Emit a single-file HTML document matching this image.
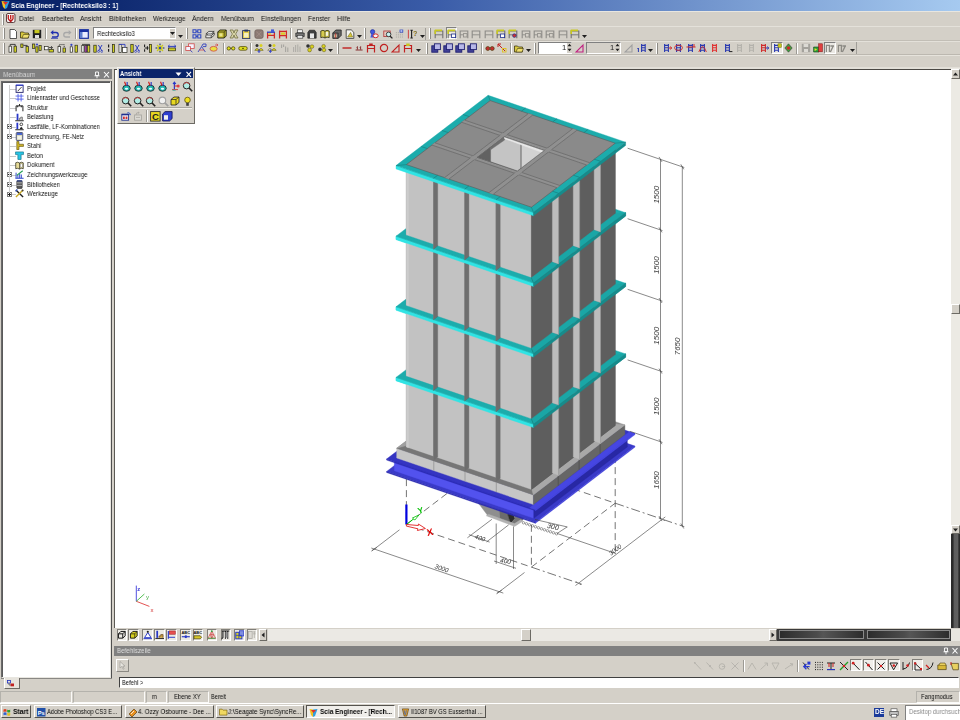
<!DOCTYPE html><html><head><meta charset="utf-8"><title>Scia Engineer</title><style>

html,body{margin:0;padding:0}
body{width:960px;height:720px;background:#d4d0c8;position:relative;overflow:hidden;
 font-family:"Liberation Sans",sans-serif;font-size:8px;color:#222;line-height:1}
.a{position:absolute}
.t{position:absolute;white-space:nowrap;will-change:transform}
.sep{position:absolute;width:1px;background:#9c9a94;box-shadow:1px 0 0 #fff}
.grip{position:absolute;width:2px;border-left:1px solid #fff;border-right:1px solid #8c8a84;box-sizing:border-box}
.sunk{position:absolute;border:1px solid;border-color:#b4b2ac #fbfaf8 #fbfaf8 #b4b2ac;box-sizing:border-box}
.raise{position:absolute;border:1px solid;border-color:#fff #6c6a64 #6c6a64 #fff;box-sizing:border-box;background:#d4d0c8}
.ic{position:absolute;width:10px;height:10px}
.tb{position:absolute;height:13px;box-sizing:border-box;border:1px solid;border-color:#fff #55534e #55534e #fff;background:#d4d0c8;font-size:8px;white-space:nowrap;overflow:hidden}
.tb span{position:absolute;top:3px}

</style></head><body>
<div class="a" style="left:0;top:0;width:960px;height:11px;background:linear-gradient(90deg,#0a246a 0%,#0a246a 8%,#3a5ca8 45%,#a6caf0 100%)"></div>
<svg class="a" style="left:1px;top:0" width="10" height="11"><polygon points="0.5,1 4,1.5 4,9 2,7" fill="#f0c020"/><polygon points="4,1.5 8.5,1 6,8 4,9" fill="#30a0e0"/><polygon points="2,2 7,2 4.5,5" fill="#e03030"/></svg>
<div class="t" style="left:11.0px;top:1.88px;font-size:7.7px;color:#fff;font-weight:bold;transform-origin:0 0;transform:scaleX(0.853);">Scia Engineer - [Rechtecksilo3 : 1]</div>
<div class="a" style="left:0;top:11px;width:960px;height:15px;background:#d4d0c8;border-top:1px solid #e8e6e0"></div>
<div class="grip" style="left:2px;top:14px;height:11px"></div>
<svg class="a" style="left:6px;top:13px" width="10" height="11"><rect x="0.5" y="0.5" width="8.5" height="9" rx="1.5" fill="#f4f4f4" stroke="#503030" stroke-width="0.9"/><path d="M2.3,2 v4 M4.7,2 v4.5 M7,2 v4 M2.3,6 L4.7,8.5 L7,6" stroke="#c01818" stroke-width="1.3" fill="none"/></svg>
<div class="t" style="left:19.0px;top:14.51px;font-size:7.2px;color:#101010;transform-origin:0 0;transform:scaleX(0.892);">Datei</div>
<div class="t" style="left:41.5px;top:14.51px;font-size:7.2px;color:#101010;transform-origin:0 0;transform:scaleX(0.919);">Bearbeiten</div>
<div class="t" style="left:80.0px;top:14.51px;font-size:7.2px;color:#101010;transform-origin:0 0;transform:scaleX(0.911);">Ansicht</div>
<div class="t" style="left:108.5px;top:14.51px;font-size:7.2px;color:#101010;transform-origin:0 0;transform:scaleX(0.943);">Bibliotheken</div>
<div class="t" style="left:153.0px;top:14.51px;font-size:7.2px;color:#101010;transform-origin:0 0;transform:scaleX(0.896);">Werkzeuge</div>
<div class="t" style="left:192.0px;top:14.51px;font-size:7.2px;color:#101010;transform-origin:0 0;transform:scaleX(0.926);">Ändern</div>
<div class="t" style="left:220.5px;top:14.51px;font-size:7.2px;color:#101010;transform-origin:0 0;transform:scaleX(0.916);">Menübaum</div>
<div class="t" style="left:260.5px;top:14.51px;font-size:7.2px;color:#101010;transform-origin:0 0;transform:scaleX(0.925);">Einstellungen</div>
<div class="t" style="left:307.5px;top:14.51px;font-size:7.2px;color:#101010;transform-origin:0 0;transform:scaleX(0.901);">Fenster</div>
<div class="t" style="left:336.5px;top:14.51px;font-size:7.2px;color:#101010;transform-origin:0 0;transform:scaleX(0.923);">Hilfe</div>
<div class="a" style="left:0;top:25.5px;width:960px;height:1px;background:#e4e1da"></div>
<div class="a" style="left:0;top:40px;width:960px;height:1px;background:#c2beb6"></div>
<div class="a" style="left:0;top:41px;width:960px;height:1px;background:#e4e1da"></div>
<div class="a" style="left:0;top:54px;width:960px;height:1px;background:#bcb8b0"></div>
<div class="a" style="left:0;top:55px;width:960px;height:1px;background:#e6e3dc"></div>
<div class="grip" style="left:3px;top:28px;height:11px"></div>
<svg class="a" style="left:8px;top:28.5px" width="10" height="10" viewBox="0 0 10 10"><path d="M2,0.5 h4.5 l2,2 v7 h-6.5 z" fill="#fff" stroke="#303030" stroke-width="0.8"/></svg>
<svg class="a" style="left:20px;top:28.5px" width="10" height="10" viewBox="0 0 10 10"><path d="M0.5,3 h3 l1,1 h4 v5 h-8 z" fill="#d8c840" stroke="#403810" stroke-width="0.8"/><path d="M2,9 l1.5,-3.5 h6 l-1.5,3.5 z" fill="#f0e070" stroke="#403810" stroke-width="0.6"/></svg>
<svg class="a" style="left:32px;top:28.5px" width="10" height="10" viewBox="0 0 10 10"><rect x="0.8" y="0.8" width="8.4" height="8.4" fill="#202020"/><rect x="2.5" y="1" width="5" height="3.2" fill="#c8c820"/><rect x="3" y="6" width="4" height="3" fill="#e0e0e0"/></svg>
<div class="sep" style="left:45px;top:28px;height:11px"></div>
<svg class="a" style="left:50px;top:28.5px" width="10" height="10" viewBox="0 0 10 10"><path d="M2,3.5 h4 a2,2 0 0 1 0,4.5 h-4" fill="none" stroke="#2030b0" stroke-width="1.3"/><path d="M0.5,3.5 l2.8,-2.5 v5 z" fill="#2030b0"/><path d="M1,9.3 h7" stroke="#2030b0" stroke-width="0.8"/></svg>
<svg class="a" style="left:62px;top:28.5px" width="10" height="10" viewBox="0 0 10 10"><path d="M8,3.5 h-4 a2,2 0 0 0 0,4.5 h4" fill="none" stroke="#a8a8a8" stroke-width="1.3"/><path d="M9.5,3.5 l-2.8,-2.5 v5 z" fill="#a8a8a8"/></svg>
<div class="sep" style="left:75px;top:28px;height:11px"></div>
<svg class="a" style="left:78.5px;top:28.5px" width="10" height="10" viewBox="0 0 10 10"><rect x="0.7" y="0.7" width="8.6" height="8.6" fill="#e8ecff" stroke="#1830a0" stroke-width="1.2"/><rect x="1" y="1" width="8" height="2" fill="#1830a0"/><rect x="1" y="3" width="2.5" height="6" fill="#6080d0"/></svg>
<div class="a" style="left:92.5px;top:27.3px;width:83px;height:11.4px;background:#fff;border:1px solid;border-color:#808080 #fff #fff #808080;box-sizing:border-box"></div>
<div class="t" style="left:97.0px;top:29.91px;font-size:7.2px;color:#101010;transform-origin:0 0;transform:scaleX(0.848);">Rechtecksilo3</div>
<div class="a" style="left:168.5px;top:28.3px;width:6.5px;height:9.4px;background:#d4d0c8;border-left:1px solid #fff;border-top:1px solid #fff;box-sizing:border-box"></div>
<svg class="a" style="left:169.5px;top:32.2px" width="5" height="4"><path d="M0,0 h5 l-2.5,3 z" fill="#202020"/></svg>
<svg class="a" style="left:177.8px;top:34.5px" width="5" height="4"><path d="M0,0 h5 l-2.5,3 z" fill="#202020"/></svg>
<div class="grip" style="left:186px;top:28px;height:11px"></div>
<svg class="a" style="left:191.6px;top:28.5px" width="10" height="10" viewBox="0 0 10 10"><path d="M1,0.8 h3 v3 h-3 z M5.8,0.8 h3 v3 h-3 z M1,5.8 h3 v3.2 h-3 z M5.8,5.8 h3 v3.2 h-3 z M4,2.3 h1.8 M4,7.4 h1.8" fill="none" stroke="#3048c0" stroke-width="1.1"/></svg>
<svg class="a" style="left:204.6px;top:28.5px" width="10" height="10" viewBox="0 0 10 10"><path d="M0.8,6.6 l3,-2.6 h5.4 l-3,2.6 z" fill="#f4f4f4" stroke="#202020" stroke-width="0.8"/><path d="M0.8,6.6 v2.2 h5.4 v-2.2 M6.2,8.8 l3,-2.6 v-2.2 M0.8,5 l3,-2.6 h5.4 l-3,2.6 z" fill="#e4e4e4" stroke="#202020" stroke-width="0.7"/></svg>
<svg class="a" style="left:216.8px;top:28.5px" width="10" height="10" viewBox="0 0 10 10"><path d="M0.8,3 l2,-2 h6.4 v6 l-2,2 h-6.4 z" fill="#c8c030" stroke="#202010" stroke-width="0.9"/><path d="M0.8,3 h6.4 v6 M7.2,3 l2,-2" fill="none" stroke="#202010" stroke-width="0.7"/><rect x="2.4" y="4.4" width="3" height="3" fill="#e8e490"/></svg>
<svg class="a" style="left:229px;top:28.5px" width="10" height="10" viewBox="0 0 10 10"><path d="M1,1 h3 l1,3 l1,-3 h3 l-2.4,4 l2.4,4 h-3 l-1,-3 l-1,3 h-3 l2.4,-4 z" fill="#d8d4a8" stroke="#6c6838" stroke-width="0.7"/></svg>
<svg class="a" style="left:241.4px;top:28.5px" width="10" height="10" viewBox="0 0 10 10"><rect x="1.6" y="1.6" width="7.2" height="8" fill="#e8d048" stroke="#283868" stroke-width="0.9"/><rect x="3.4" y="0.6" width="3.6" height="2" fill="#283868"/><rect x="3" y="4" width="4.4" height="4.4" fill="#f4f0c0"/></svg>
<svg class="a" style="left:253.6px;top:28.5px" width="10" height="10" viewBox="0 0 10 10"><rect x="0.8" y="0.8" width="8.4" height="8.6" rx="2" fill="#8c7a74" stroke="#6a5c58" stroke-width="0.6"/><path d="M2.4,2.6 L7.6,7.8 M7.6,2.6 L2.4,7.8" stroke="#a08c86" stroke-width="0.9"/></svg>
<svg class="a" style="left:265.8px;top:28.5px" width="10" height="10" viewBox="0 0 10 10"><path d="M1.6,9.4 V3.4 M8.4,9.4 V3.4 M1.6,6.4 H8.4" stroke="#d02828" stroke-width="1.3" fill="none"/><path d="M1,3.2 H9" stroke="#2838c0" stroke-width="1.3"/><rect x="5" y="0.4" width="3" height="2.6" fill="#4058d8"/><rect x="2.8" y="4.2" width="2" height="1.8" fill="#e0c828"/></svg>
<svg class="a" style="left:278.2px;top:28.5px" width="10" height="10" viewBox="0 0 10 10"><path d="M1.6,9.4 V1.6 M8.4,9.4 V1.6 M1.6,6.6 H8.4 M1.6,2.4 H8.4" stroke="#d02828" stroke-width="1.3" fill="none"/><rect x="2.8" y="3.4" width="4.4" height="2.4" fill="#e0c828"/></svg>
<div class="sep" style="left:290px;top:28px;height:11px"></div>
<svg class="a" style="left:294.6px;top:28.5px" width="10" height="10" viewBox="0 0 10 10"><rect x="2.6" y="0.8" width="5" height="3" fill="#f4f4f4" stroke="#303030" stroke-width="0.6"/><path d="M0.8,4 h8.4 v3.6 h-8.4 z" fill="#787878" stroke="#202020" stroke-width="0.7"/><rect x="2.2" y="6.4" width="5.6" height="2.8" fill="#e8e8e8" stroke="#303030" stroke-width="0.6"/></svg>
<svg class="a" style="left:307px;top:28.5px" width="10" height="10" viewBox="0 0 10 10"><path d="M0.8,9.2 V3.6 l1.6,-2.4 h5.2 l1.6,2.4 V9.2 z" fill="#404040" stroke="#181818" stroke-width="0.6"/><rect x="3" y="4.4" width="4" height="4.8" fill="#e8e8e8"/></svg>
<svg class="a" style="left:320px;top:28.5px" width="10" height="10" viewBox="0 0 10 10"><path d="M0.8,2 q2.2,-1.4 4.2,0.2 q2,-1.6 4.2,-0.2 v6.6 q-2.2,-1.2 -4.2,0.4 q-2,-1.6 -4.2,-0.4 z" fill="#d8cc50" stroke="#282810" stroke-width="0.8"/><path d="M5,2.2 v6.8" stroke="#282810" stroke-width="0.7"/><rect x="5.8" y="3" width="2.4" height="3.8" fill="#f4f4e0"/></svg>
<svg class="a" style="left:332.4px;top:28.5px" width="10" height="10" viewBox="0 0 10 10"><path d="M0.8,4 l3,-3 h5.4 v5.4 l-3,3 h-5.4 z" fill="#686868" stroke="#202020" stroke-width="0.8"/><path d="M0.8,4 h5.4 v5.4" fill="none" stroke="#202020" stroke-width="0.6"/><rect x="2" y="5.4" width="3" height="2.8" fill="#c8b090"/><path d="M3.6,4 v5.4" stroke="#c03030" stroke-width="0.7"/></svg>
<svg class="a" style="left:344.6px;top:28.5px" width="10" height="10" viewBox="0 0 10 10"><path d="M1.2,0.8 h5 l2.6,2.6 v6 h-7.6 z" fill="#f4f4f0" stroke="#303030" stroke-width="0.8"/><path d="M2.6,8 l3,-4.6 l2,4.6 z" fill="#d8c838" stroke="#605810" stroke-width="0.5"/></svg>
<svg class="a" style="left:356.5px;top:34.5px" width="5" height="4"><path d="M0,0 h5 l-2.5,3 z" fill="#202020"/></svg>
<div class="grip" style="left:364px;top:28px;height:11px"></div>
<svg class="a" style="left:369.4px;top:28.5px" width="10" height="10" viewBox="0 0 10 10"><circle cx="3.6" cy="2.8" r="2.2" fill="#4058e0" stroke="#182890" stroke-width="0.6"/><path d="M2.4,4.8 h2.6 l1,3.8 h-4.6 z" fill="#4058e0"/><ellipse cx="6.6" cy="6.8" rx="2.6" ry="1.9" fill="#f4f4f4" stroke="#d02828" stroke-width="1"/></svg>
<svg class="a" style="left:382.6px;top:28.5px" width="10" height="10" viewBox="0 0 10 10"><rect x="0.8" y="2" width="6.4" height="5.6" fill="#e8c8c0" stroke="#b03030" stroke-width="0.8"/><circle cx="5.6" cy="5.4" r="2.3" fill="#c8f0f0" stroke="#202020" stroke-width="0.8"/><path d="M7.2,7.2 L9.4,9.4" stroke="#202020" stroke-width="1.3"/></svg>
<svg class="a" style="left:395px;top:28.5px" width="10" height="10" viewBox="0 0 10 10"><path d="M1.4,3 V9 M3.4,3 V9 M5.4,3 V9 M7.4,3 V9" stroke="#a8a6a0" stroke-width="0.8" stroke-dasharray="1 0.8"/><rect x="4.6" y="0.6" width="3.6" height="3" fill="#3048c0"/><rect x="5.4" y="1.4" width="2" height="1.2" fill="#fff"/></svg>
<svg class="a" style="left:407.4px;top:28.5px" width="10" height="10" viewBox="0 0 10 10"><path d="M1.4,0.8 V9.4" stroke="#d05050" stroke-width="1.1"/><path d="M3.4,1.2 h2.4 M3.4,9 h2.4 M4.6,1.2 V9" stroke="#202020" stroke-width="1.1" fill="none"/><text x="6" y="7" font-size="7.5" font-weight="bold" fill="#807020" font-family="Liberation Sans, sans-serif">?</text></svg>
<svg class="a" style="left:419.5px;top:34.5px" width="5" height="4"><path d="M0,0 h5 l-2.5,3 z" fill="#202020"/></svg>
<div class="a" style="left:424.6px;top:27.5px;width:1px;height:12px;background:#a09e98"></div>
<div class="grip" style="left:429px;top:28px;height:11px"></div>
<svg class="a" style="left:434.3px;top:28.5px" width="10" height="10" viewBox="0 0 10 10"><path d="M1.2,9.2 V2 H8.8 V9.2" fill="none" stroke="#707070" stroke-width="1.1"/><path d="M1.2,5.8 H8.8" stroke="#707070" stroke-width="0.9"/><path d="M0.8,1.4 H8 M1.2,1 V5" stroke="#c8c820" stroke-width="1.6" fill="none"/></svg>
<div class="a" style="left:445.83px;top:27.2px;width:11.6px;height:11.8px;background:#ebe9e4;border:1px solid;border-color:#808080 #fff #fff #808080;box-sizing:border-box"></div>
<svg class="a" style="left:446.6px;top:28.5px" width="10" height="10" viewBox="0 0 10 10"><path d="M1.2,9.2 V2 H8.8 V9.2" fill="none" stroke="#707070" stroke-width="1.1"/><path d="M1.2,5.8 H8.8" stroke="#707070" stroke-width="0.9"/><path d="M0.8,1.4 H8 M1.2,1 V5" stroke="#c8c820" stroke-width="1.6" fill="none"/><rect x="4.6" y="5" width="4" height="3.6" fill="#fff" stroke="#203090" stroke-width="0.8"/></svg>
<svg class="a" style="left:459.0px;top:28.5px" width="10" height="10" viewBox="0 0 10 10"><path d="M1.2,9.2 V2 H8.8 V9.2" fill="none" stroke="#8c8a86" stroke-width="1.1"/><path d="M1.2,5.8 H8.8" stroke="#8c8a86" stroke-width="0.9"/><rect x="4.4" y="4.6" width="3.6" height="3.4" fill="#d4d0c8" stroke="#8c8a86" stroke-width="0.8"/></svg>
<svg class="a" style="left:471.3px;top:28.5px" width="10" height="10" viewBox="0 0 10 10"><path d="M1.2,9.2 V2 H8.8 V9.2" fill="none" stroke="#8c8a86" stroke-width="1.1"/><path d="M1.2,5.8 H8.8" stroke="#8c8a86" stroke-width="0.9"/></svg>
<svg class="a" style="left:483.6px;top:28.5px" width="10" height="10" viewBox="0 0 10 10"><path d="M1.2,9.2 V2 H8.8 V9.2" fill="none" stroke="#8c8a86" stroke-width="1.1"/><path d="M1.2,5.8 H8.8" stroke="#8c8a86" stroke-width="0.9"/></svg>
<svg class="a" style="left:495.9px;top:28.5px" width="10" height="10" viewBox="0 0 10 10"><path d="M1.2,9.2 V2 H8.8 V9.2" fill="none" stroke="#707070" stroke-width="1.1"/><path d="M1.2,5.8 H8.8" stroke="#707070" stroke-width="0.9"/><path d="M0.8,1.4 H8 M1.2,1 V5" stroke="#c8c820" stroke-width="1.6" fill="none"/><rect x="4.6" y="5" width="4" height="3.6" fill="#fff" stroke="#203090" stroke-width="0.8"/></svg>
<svg class="a" style="left:508.3px;top:28.5px" width="10" height="10" viewBox="0 0 10 10"><path d="M1.2,9.2 V2 H8.8 V9.2" fill="none" stroke="#707070" stroke-width="1.1"/><path d="M1.2,5.8 H8.8" stroke="#707070" stroke-width="0.9"/><path d="M0.8,1.4 H8 M1.2,1 V5" stroke="#c8c820" stroke-width="1.6" fill="none"/><circle cx="6.4" cy="6.6" r="1.8" fill="#d03030" stroke="#203090" stroke-width="0.7"/></svg>
<svg class="a" style="left:520.6px;top:28.5px" width="10" height="10" viewBox="0 0 10 10"><path d="M1.2,9.2 V2 H8.8 V9.2" fill="none" stroke="#8c8a86" stroke-width="1.1"/><path d="M1.2,5.8 H8.8" stroke="#8c8a86" stroke-width="0.9"/><rect x="4.4" y="4.6" width="3.6" height="3.4" fill="#d4d0c8" stroke="#8c8a86" stroke-width="0.8"/></svg>
<svg class="a" style="left:532.9px;top:28.5px" width="10" height="10" viewBox="0 0 10 10"><path d="M1.2,9.2 V2 H8.8 V9.2" fill="none" stroke="#8c8a86" stroke-width="1.1"/><path d="M1.2,5.8 H8.8" stroke="#8c8a86" stroke-width="0.9"/><rect x="4.4" y="4.6" width="3.6" height="3.4" fill="#d4d0c8" stroke="#8c8a86" stroke-width="0.8"/></svg>
<svg class="a" style="left:545.3px;top:28.5px" width="10" height="10" viewBox="0 0 10 10"><path d="M1.2,9.2 V2 H8.8 V9.2" fill="none" stroke="#8c8a86" stroke-width="1.1"/><path d="M1.2,5.8 H8.8" stroke="#8c8a86" stroke-width="0.9"/><rect x="4.4" y="4.6" width="3.6" height="3.4" fill="#d4d0c8" stroke="#8c8a86" stroke-width="0.8"/></svg>
<svg class="a" style="left:557.6px;top:28.5px" width="10" height="10" viewBox="0 0 10 10"><path d="M1.2,9.2 V2 H8.8 V9.2" fill="none" stroke="#8c8a86" stroke-width="1.1"/><path d="M1.2,5.8 H8.8" stroke="#8c8a86" stroke-width="0.9"/></svg>
<svg class="a" style="left:569.9px;top:28.5px" width="10" height="10" viewBox="0 0 10 10"><path d="M1.2,9.2 V2 H8.8 V9.2" fill="none" stroke="#707070" stroke-width="1.1"/><path d="M1.2,5.8 H8.8" stroke="#707070" stroke-width="0.9"/><path d="M0.8,1.4 H8 M1.2,1 V5" stroke="#c8c820" stroke-width="1.6" fill="none"/></svg>
<svg class="a" style="left:582px;top:34.5px" width="5" height="4"><path d="M0,0 h5 l-2.5,3 z" fill="#202020"/></svg>
<div class="grip" style="left:3px;top:42.5px;height:11px"></div>
<svg class="a" style="left:7.6px;top:43px" width="10" height="10" viewBox="0 0 10 10"><rect x="1" y="3.2" width="2.4" height="6" fill="#fff" stroke="#282820" stroke-width="0.7"/><rect x="6" y="3.2" width="2.4" height="6" fill="#d0d020" stroke="#282820" stroke-width="0.7"/><path d="M2.2,3 V1.4 H7.2 V3" fill="none" stroke="#202020" stroke-width="0.8"/></svg>
<svg class="a" style="left:19.9px;top:43px" width="10" height="10" viewBox="0 0 10 10"><rect x="0.8" y="1" width="2.2" height="3.6" fill="#d0d020" stroke="#282820" stroke-width="0.7"/><rect x="6" y="3.6" width="2.4" height="5.6" fill="#d0d020" stroke="#282820" stroke-width="0.7"/><path d="M3.4,2.4 H7.2 V3.4" fill="none" stroke="#202020" stroke-width="0.8"/></svg>
<svg class="a" style="left:32.1px;top:43px" width="10" height="10" viewBox="0 0 10 10"><rect x="0.6" y="1" width="2.2" height="4.4" fill="#d0d020" stroke="#282820" stroke-width="0.7"/><rect x="3.8" y="3.8" width="2.2" height="5.4" fill="#d0d020" stroke="#282820" stroke-width="0.7"/><rect x="7" y="2.6" width="2.2" height="5" fill="#d0d020" stroke="#282820" stroke-width="0.7"/><circle cx="5" cy="1.6" r="1" fill="#3040c0"/></svg>
<svg class="a" style="left:44.4px;top:43px" width="10" height="10" viewBox="0 0 10 10"><rect x="0.6" y="3.4" width="3.6" height="3.4" fill="#fff" stroke="#282820" stroke-width="0.7"/><rect x="5" y="6.4" width="4.4" height="2.6" fill="#d0d020" stroke="#282820" stroke-width="0.7"/><path d="M5,4.6 h3 M7,3.2 l1.6,1.4 l-1.6,1.4" fill="none" stroke="#202020" stroke-width="0.8"/></svg>
<svg class="a" style="left:56.6px;top:43px" width="10" height="10" viewBox="0 0 10 10"><rect x="1" y="3.6" width="2.4" height="5.6" fill="#fff" stroke="#282820" stroke-width="0.7"/><rect x="6" y="5" width="2.4" height="4.2" fill="#d0d020" stroke="#282820" stroke-width="0.7"/><path d="M2.2,3.4 V1.6 H7.2 V4.8" fill="none" stroke="#202020" stroke-width="0.8" stroke-dasharray="1.2 0.8"/></svg>
<svg class="a" style="left:68.9px;top:43px" width="10" height="10" viewBox="0 0 10 10"><rect x="1.2" y="3.8" width="2.4" height="5.4" fill="#fff" stroke="#282820" stroke-width="0.7"/><rect x="6" y="2.2" width="2.4" height="7" fill="#d0d020" stroke="#282820" stroke-width="0.7"/><circle cx="2.4" cy="1.8" r="1.1" fill="#3040c0"/></svg>
<svg class="a" style="left:81.2px;top:43px" width="10" height="10" viewBox="0 0 10 10"><rect x="0.8" y="2.6" width="2.2" height="6.6" fill="#fff" stroke="#282820" stroke-width="0.7"/><rect x="3.8" y="2.6" width="2" height="6.6" fill="#b040c0" stroke="#282820" stroke-width="0.7"/><rect x="6.6" y="2.6" width="2.2" height="6.6" fill="#d0d020" stroke="#282820" stroke-width="0.7"/><path d="M1,1.4 H9" stroke="#202020" stroke-width="0.8"/></svg>
<svg class="a" style="left:93.4px;top:43px" width="10" height="10" viewBox="0 0 10 10"><rect x="0.8" y="2.2" width="2.4" height="7" fill="#d0d020" stroke="#282820" stroke-width="0.7"/><path d="M5.4,2 L9,8 M9,2 L5.4,8" stroke="#3040c0" stroke-width="1"/><circle cx="5.6" cy="8.4" r="1" fill="none" stroke="#3040c0" stroke-width="0.7"/><circle cx="8.8" cy="8.4" r="1" fill="none" stroke="#3040c0" stroke-width="0.7"/></svg>
<svg class="a" style="left:105.7px;top:43px" width="10" height="10" viewBox="0 0 10 10"><rect x="6.4" y="1.4" width="2.2" height="8" fill="#d0d020" stroke="#282820" stroke-width="0.7"/><path d="M2.6,1.6 V4.4 M2.6,6 V8.8" stroke="#202020" stroke-width="1.2"/></svg>
<svg class="a" style="left:117.9px;top:43px" width="10" height="10" viewBox="0 0 10 10"><rect x="1" y="1.4" width="2.2" height="8" fill="#fff" stroke="#282820" stroke-width="0.7"/><rect x="4.6" y="4.4" width="4.4" height="5" fill="#fff" stroke="#282820" stroke-width="0.7"/><path d="M1,1.4 H7 V4.4" fill="none" stroke="#3040c0" stroke-width="0.9"/></svg>
<svg class="a" style="left:130.2px;top:43px" width="10" height="10" viewBox="0 0 10 10"><rect x="0.8" y="1.4" width="2.4" height="8" fill="#d0d020" stroke="#282820" stroke-width="0.7"/><path d="M5.4,2 L9,8 M9,2 L5.4,8" stroke="#3040c0" stroke-width="1"/><circle cx="5.6" cy="8.4" r="1" fill="none" stroke="#3040c0" stroke-width="0.7"/><circle cx="8.8" cy="8.4" r="1" fill="none" stroke="#3040c0" stroke-width="0.7"/></svg>
<svg class="a" style="left:142.5px;top:43px" width="10" height="10" viewBox="0 0 10 10"><rect x="6.4" y="1.4" width="2.2" height="8" fill="#d0d020" stroke="#282820" stroke-width="0.7"/><path d="M1.6,1.6 V4 M1.6,6.2 V8.8 M1.6,5 H5.6 M4.4,3.2 V6.8" stroke="#202020" stroke-width="1.1" fill="none"/></svg>
<svg class="a" style="left:154.7px;top:43px" width="10" height="10" viewBox="0 0 10 10"><path d="M5,0.8 V9.2 M0.8,5 H9.2 M2,2 L8,8 M8,2 L2,8" stroke="#c8c820" stroke-width="1.3"/><circle cx="5" cy="5" r="1.2" fill="#3040c0"/><circle cx="1.2" cy="5" r="0.8" fill="#3040c0"/><circle cx="8.8" cy="5" r="0.8" fill="#3040c0"/><circle cx="5" cy="1.2" r="0.8" fill="#3040c0"/><circle cx="5" cy="8.8" r="0.8" fill="#3040c0"/></svg>
<svg class="a" style="left:167.0px;top:43px" width="10" height="10" viewBox="0 0 10 10"><rect x="1.4" y="5" width="7.2" height="2.8" fill="#d0d020" stroke="#282820" stroke-width="0.7"/><path d="M1,3.4 H9 M2.6,2 L1,3.4 L2.6,4.8 M7.4,2 L9,3.4 L7.4,4.8" fill="none" stroke="#3040c0" stroke-width="1"/></svg>
<div class="sep" style="left:180.5px;top:42.5px;height:11px"></div>
<svg class="a" style="left:184.6px;top:43px" width="10" height="10" viewBox="0 0 10 10"><rect x="3.6" y="0.8" width="5.6" height="4.6" fill="#f4f4ff" stroke="#d04848" stroke-width="0.8"/><rect x="0.8" y="3.6" width="4.6" height="3.8" fill="#f4f4ff" stroke="#d04848" stroke-width="0.8"/><path d="M5.4,7.4 l2,1.8" stroke="#3040c0" stroke-width="0.9"/></svg>
<svg class="a" style="left:197px;top:43px" width="10" height="10" viewBox="0 0 10 10"><path d="M1,9 L4.6,3.6 L8.4,9 M4.6,3.6 L6,1 h3 v2.6 h-3" fill="none" stroke="#3040c0" stroke-width="0.9"/><path d="M2.2,7 h5" stroke="#d04848" stroke-width="0.8"/></svg>
<svg class="a" style="left:209.4px;top:43px" width="10" height="10" viewBox="0 0 10 10"><ellipse cx="4.6" cy="5.8" rx="3.6" ry="2.4" fill="#e8e040" stroke="#d04848" stroke-width="0.8"/><path d="M6,2 h3 M7.6,0.8 l1.4,1.2 l-1.4,1.2" fill="none" stroke="#d04848" stroke-width="0.8"/></svg>
<svg class="a" style="left:226px;top:43px" width="10" height="10" viewBox="0 0 10 10"><circle cx="2.8" cy="5.4" r="1.7" fill="#e0e020" stroke="#403800" stroke-width="0.7"/><circle cx="7.2" cy="5.4" r="1.7" fill="#e0e020" stroke="#403800" stroke-width="0.7"/><path d="M4.5,5.4 h1" stroke="#403800" stroke-width="0.8"/></svg>
<svg class="a" style="left:238.2px;top:43px" width="10" height="10" viewBox="0 0 10 10"><rect x="0.8" y="3.6" width="8.4" height="3.6" rx="1.6" fill="#e0e020" stroke="#403800" stroke-width="0.7"/><path d="M4,5.4 h2" stroke="#403800" stroke-width="0.8"/></svg>
<svg class="a" style="left:254.4px;top:43px" width="10" height="10" viewBox="0 0 10 10"><circle cx="3" cy="2.6" r="1.5" fill="#303030"/><circle cx="7" cy="2.6" r="1.5" fill="#d8d020"/><path d="M0.8,7.4 q2.2,-4 4.4,0 z" fill="#d8d020" stroke="#403800" stroke-width="0.4"/><path d="M4.8,7.4 q2.2,-4 4.4,0 z" fill="#d8d020" stroke="#403800" stroke-width="0.4"/><path d="M5,6.4 v3 M3.8,8.2 l1.2,1.2 l1.2,-1.2" stroke="#2030d0" stroke-width="0.9" fill="none"/></svg>
<svg class="a" style="left:266.8px;top:43px" width="10" height="10" viewBox="0 0 10 10"><circle cx="3" cy="2.6" r="1.5" fill="#303030"/><circle cx="7" cy="2.6" r="1.5" fill="#d8d020"/><path d="M0.8,7.4 q2.2,-4 4.4,0 z" fill="#e8e8e8" stroke="#403800" stroke-width="0.4"/><path d="M4.8,7.4 q2.2,-4 4.4,0 z" fill="#d8d020" stroke="#403800" stroke-width="0.4"/><path d="M3.4,6.4 v3 M2.2,8.2 l1.2,1.2 l1.2,-1.2" stroke="#2030d0" stroke-width="0.9" fill="none"/></svg>
<svg class="a" style="left:280px;top:43px" width="10" height="10" viewBox="0 0 10 10"><path d="M1.6,1.4 V5 M3.6,1.4 V4 M5.6,3.4 V9 M7.8,4.4 V9" stroke="#a8a6a0" stroke-width="1.1"/></svg>
<svg class="a" style="left:292.4px;top:43px" width="10" height="10" viewBox="0 0 10 10"><path d="M1.6,4 V9 M3.6,2 V9 M5.8,1.4 V9 M8,3.4 V9" stroke="#b0aea8" stroke-width="1.1"/></svg>
<svg class="a" style="left:304.8px;top:43px" width="10" height="10" viewBox="0 0 10 10"><circle cx="3" cy="3" r="1.8" fill="#303030"/><circle cx="7" cy="3.6" r="1.8" fill="#d8d020" stroke="#403800" stroke-width="0.4"/><circle cx="4.6" cy="7" r="1.9" fill="#d8d020" stroke="#403800" stroke-width="0.4"/></svg>
<svg class="a" style="left:317.2px;top:43px" width="10" height="10" viewBox="0 0 10 10"><circle cx="3" cy="6.4" r="1.8" fill="#303030"/><circle cx="6.6" cy="3.2" r="1.8" fill="#d8d020" stroke="#403800" stroke-width="0.4"/><circle cx="7" cy="7" r="1.8" fill="#d8d020" stroke="#403800" stroke-width="0.4"/></svg>
<div class="sep" style="left:222.6px;top:42.5px;height:11px"></div>
<div class="sep" style="left:250.4px;top:42.5px;height:11px"></div>
<svg class="a" style="left:328px;top:48.5px" width="5" height="4"><path d="M0,0 h5 l-2.5,3 z" fill="#202020"/></svg>
<div class="grip" style="left:336.5px;top:42.5px;height:11px"></div>
<svg class="a" style="left:342px;top:43px" width="10" height="10" viewBox="0 0 10 10"><path d="M0.5,5 h9" stroke="#c02020" stroke-width="1.4"/></svg>
<svg class="a" style="left:354px;top:43px" width="10" height="10" viewBox="0 0 10 10"><path d="M1.6,7 h7" stroke="#802020" stroke-width="0.9"/><path d="M3.4,3.6 v3 M6.6,3.6 v3 M2.6,4.4 l0.8,-0.8 M5.8,4.4 l0.8,-0.8" stroke="#802020" stroke-width="0.9" fill="none"/></svg>
<svg class="a" style="left:366px;top:43px" width="10" height="10" viewBox="0 0 10 10"><path d="M1.5,9.5 v-7 h7 v7 M1.5,5.5 h7" fill="none" stroke="#c02020" stroke-width="1.2"/><rect x="3.2" y="0.5" width="3.5" height="2.5" fill="#c02020"/></svg>
<svg class="a" style="left:378.5px;top:43px" width="10" height="10" viewBox="0 0 10 10"><circle cx="5" cy="5" r="3.6" fill="none" stroke="#c02020" stroke-width="1.2"/></svg>
<svg class="a" style="left:391px;top:43px" width="10" height="10" viewBox="0 0 10 10"><path d="M1,9 L8,9 L8,2 z" fill="none" stroke="#c02020" stroke-width="1.1"/></svg>
<svg class="a" style="left:403px;top:43px" width="10" height="10" viewBox="0 0 10 10"><path d="M1.5,9.5 v-7 h7 v7 M1.5,5.5 h7" fill="none" stroke="#c02020" stroke-width="1.2"/><rect x="3.2" y="0.5" width="3.5" height="2.5" fill="#c8c820"/></svg>
<svg class="a" style="left:416px;top:48.5px" width="5" height="4"><path d="M0,0 h5 l-2.5,3 z" fill="#202020"/></svg>
<div class="grip" style="left:426px;top:42.5px;height:11px"></div>
<svg class="a" style="left:430.5px;top:43px" width="10" height="10" viewBox="0 0 10 10"><rect x="0.8" y="2.8" width="6" height="6.4" fill="#404098" stroke="#202070" stroke-width="0.9"/><rect x="3.4" y="0.8" width="6" height="5.8" fill="#b8b8e8" stroke="#202070" stroke-width="0.9"/></svg>
<svg class="a" style="left:442.7px;top:43px" width="10" height="10" viewBox="0 0 10 10"><rect x="0.8" y="2.8" width="6" height="6.4" fill="#404098" stroke="#202070" stroke-width="0.9"/><rect x="3.4" y="0.8" width="6" height="5.8" fill="#b8b8e8" stroke="#202070" stroke-width="0.9"/></svg>
<svg class="a" style="left:454.9px;top:43px" width="10" height="10" viewBox="0 0 10 10"><rect x="0.8" y="2.8" width="6" height="6.4" fill="#404098" stroke="#202070" stroke-width="0.9"/><rect x="3.4" y="0.8" width="6" height="5.8" fill="#b8b8e8" stroke="#202070" stroke-width="0.9"/></svg>
<svg class="a" style="left:467.09999999999997px;top:43px" width="10" height="10" viewBox="0 0 10 10"><rect x="0.8" y="2.8" width="6" height="6.4" fill="#404098" stroke="#202070" stroke-width="0.9"/><rect x="3.4" y="0.8" width="6" height="5.8" fill="#b8b8e8" stroke="#202070" stroke-width="0.9"/></svg>
<div class="sep" style="left:481px;top:42.5px;height:11px"></div>
<svg class="a" style="left:484.5px;top:43px" width="10" height="10" viewBox="0 0 10 10"><circle cx="2.8" cy="5.5" r="2" fill="#c03030" stroke="#403800" stroke-width="0.6"/><circle cx="7.2" cy="5.5" r="2" fill="#c03030" stroke="#403800" stroke-width="0.6"/></svg>
<svg class="a" style="left:497px;top:43px" width="10" height="10" viewBox="0 0 10 10"><path d="M1,1 L8,8" stroke="#c02020" stroke-width="1"/><path d="M1,1 h3 M1,1 v3" stroke="#c02020" stroke-width="1"/><rect x="5.5" y="5.5" width="3.5" height="3.5" fill="none" stroke="#e0c020" stroke-width="0.9"/></svg>
<div class="sep" style="left:510px;top:42.5px;height:11px"></div>
<svg class="a" style="left:514px;top:43px" width="10" height="10" viewBox="0 0 10 10"><path d="M0.5,3 h3 l1,1 h4 v5 h-8 z" fill="#d8c840" stroke="#403810" stroke-width="0.8"/><path d="M2,9 l1.5,-3.5 h6 l-1.5,3.5 z" fill="#f0e070" stroke="#403810" stroke-width="0.6"/></svg>
<svg class="a" style="left:526px;top:48.5px" width="5" height="4"><path d="M0,0 h5 l-2.5,3 z" fill="#202020"/></svg>
<div class="grip" style="left:533.5px;top:42.5px;height:11px"></div>
<div class="a" style="left:538px;top:41.5px;width:34px;height:12px;background:#fff;border:1px solid;border-color:#808080 #fff #fff #808080;box-sizing:border-box"></div>
<div class="t" style="left:561.5px;top:44px;font-size:7.6px">1</div>
<div class="a" style="left:566px;top:42.5px;width:6px;height:10px;background:#d4d0c8;border-left:1px solid #fff"></div>
<svg class="a" style="left:566.5px;top:43px" width="5" height="9"><path d="M0.5,3.2 l2,-2.4 l2,2.4 z M0.5,5.8 l2,2.4 l2,-2.4 z" fill="#202020"/></svg>
<svg class="a" style="left:574.5px;top:43px" width="10" height="10" viewBox="0 0 10 10"><path d="M1,9 L8,9 L8,2 z" fill="none" stroke="#c02080" stroke-width="1.1"/></svg>
<div class="a" style="left:586px;top:41.5px;width:35px;height:12px;background:#d4d0c8;border:1px solid;border-color:#808080 #fff #fff #808080;box-sizing:border-box"></div>
<div class="t" style="left:609.5px;top:44px;font-size:7.6px">1</div>
<svg class="a" style="left:614.5px;top:43px" width="5" height="9"><path d="M0.5,3.2 l2,-2.4 l2,2.4 z M0.5,5.8 l2,2.4 l2,-2.4 z" fill="#202020"/></svg>
<svg class="a" style="left:624px;top:43px" width="10" height="10" viewBox="0 0 10 10"><path d="M1,9 L8,9 L8,2 z" fill="none" stroke="#a0a0a0" stroke-width="1.1"/></svg>
<svg class="a" style="left:636.5px;top:43px" width="10" height="10" viewBox="0 0 10 10"><path d="M4.6,1 V9 M8.2,1 V9 M4.6,2.4 H8.2 M4.6,4.8 H8.2 M4.6,7.2 H8.2" fill="none" stroke="#2838b0" stroke-width="1.1"/><path d="M1.4,9 V5 l-1,1" fill="none" stroke="#2838b0" stroke-width="1"/></svg>
<svg class="a" style="left:648px;top:48.5px" width="5" height="4"><path d="M0,0 h5 l-2.5,3 z" fill="#202020"/></svg>
<div class="grip" style="left:656px;top:42.5px;height:11px"></div>
<svg class="a" style="left:662.0px;top:43px" width="10" height="10" viewBox="0 0 10 10"><path d="M2.6,1 V9 M6.4,1 V9 M2.6,2.4 H6.4 M2.6,4.8 H6.4 M2.6,7.2 H6.4" fill="none" stroke="#2838b0" stroke-width="1.1"/><path d="M6.6,5 h3 M8.2,3.6 l1.6,1.4 l-1.6,1.4" fill="none" stroke="#d02828" stroke-width="1"/></svg>
<svg class="a" style="left:674.0px;top:43px" width="10" height="10" viewBox="0 0 10 10"><path d="M2.6,1 V9 M6.4,1 V9 M2.6,2.4 H6.4 M2.6,4.8 H6.4 M2.6,7.2 H6.4" fill="none" stroke="#2838b0" stroke-width="1.1"/><ellipse cx="4.5" cy="4.8" rx="4" ry="2.6" fill="none" stroke="#d02828" stroke-width="0.9"/></svg>
<svg class="a" style="left:686.2px;top:43px" width="10" height="10" viewBox="0 0 10 10"><path d="M2.6,1 V9 M6.4,1 V9 M2.6,2.4 H6.4 M2.6,4.8 H6.4 M2.6,7.2 H6.4" fill="none" stroke="#2838b0" stroke-width="1.1"/><path d="M0.4,4 h9.2" stroke="#d02828" stroke-width="1"/><path d="M8,1 v3" stroke="#d02828" stroke-width="1"/></svg>
<svg class="a" style="left:698.3px;top:43px" width="10" height="10" viewBox="0 0 10 10"><path d="M2.6,1 V9 M6.4,1 V9 M2.6,2.4 H6.4 M2.6,4.8 H6.4 M2.6,7.2 H6.4" fill="none" stroke="#2838b0" stroke-width="1.1"/><path d="M0.8,9 q3.8,-11 7.6,0" fill="none" stroke="#d02828" stroke-width="0.9"/></svg>
<svg class="a" style="left:709.5px;top:43px" width="10" height="10" viewBox="0 0 10 10"><path d="M2.6,1 V9 M6.4,1 V9 M2.6,2.4 H6.4 M2.6,4.8 H6.4 M2.6,7.2 H6.4" fill="none" stroke="#e03030" stroke-width="1.1"/></svg>
<svg class="a" style="left:722.6px;top:43px" width="10" height="10" viewBox="0 0 10 10"><path d="M2.6,1 V9 M6.4,1 V9 M2.6,2.4 H6.4 M2.6,4.8 H6.4 M2.6,7.2 H6.4" fill="none" stroke="#2838b0" stroke-width="1.1"/><path d="M6.4,8.6 h3" stroke="#202020" stroke-width="1"/></svg>
<svg class="a" style="left:734.8px;top:43px" width="10" height="10" viewBox="0 0 10 10"><path d="M2.6,1 V9 M6.4,1 V9 M2.6,2.4 H6.4 M2.6,4.8 H6.4 M2.6,7.2 H6.4" fill="none" stroke="#b4b2ac" stroke-width="1.1"/></svg>
<svg class="a" style="left:747.0px;top:43px" width="10" height="10" viewBox="0 0 10 10"><path d="M2.6,1 V9 M6.4,1 V9 M2.6,2.4 H6.4 M2.6,4.8 H6.4 M2.6,7.2 H6.4" fill="none" stroke="#b4b2ac" stroke-width="1.1"/></svg>
<svg class="a" style="left:759.0px;top:43px" width="10" height="10" viewBox="0 0 10 10"><path d="M2.6,1 V9 M6.4,1 V9 M2.6,2.4 H6.4 M2.6,4.8 H6.4 M2.6,7.2 H6.4" fill="none" stroke="#d02828" stroke-width="1.1"/><path d="M6.6,5 h3 M8.2,3.6 l1.6,1.4 l-1.6,1.4" fill="none" stroke="#2838b0" stroke-width="1"/></svg>
<div class="a" style="left:771px;top:41.6px;width:11.8px;height:12px;background:#ebe9e4;border:1px solid;border-color:#808080 #fff #fff #808080;box-sizing:border-box"></div>
<svg class="a" style="left:772.0px;top:43px" width="10" height="10" viewBox="0 0 10 10"><path d="M2.6,1 V9 M6.4,1 V9 M2.6,2.4 H6.4 M2.6,4.8 H6.4 M2.6,7.2 H6.4" fill="none" stroke="#2838b0" stroke-width="1.1"/><rect x="6" y="0.8" width="3.4" height="3.6" fill="#c8c820" stroke="#707010" stroke-width="0.5"/></svg>
<svg class="a" style="left:783.6px;top:43px" width="9" height="10" viewBox="0 0 9 10"><path d="M4.5,0.8 L8.2,5 L4.5,9.2 L0.8,5 z" fill="#40a040" stroke="#202020" stroke-width="0.5"/><circle cx="4.5" cy="5" r="1.8" fill="#d02828"/></svg>
<div class="sep" style="left:795.5px;top:42.5px;height:11px"></div>
<svg class="a" style="left:800.6px;top:43px" width="10" height="10" viewBox="0 0 10 10"><rect x="0.8" y="0.8" width="8.4" height="8.4" fill="#a4a29c"/><rect x="2.6" y="1" width="4.6" height="3" fill="#dcdad4"/><rect x="3" y="6" width="4" height="3" fill="#dcdad4"/></svg>
<svg class="a" style="left:812.6px;top:43px" width="10" height="10" viewBox="0 0 10 10"><path d="M0.6,4 h5.4 v5 h-5.4 z" fill="#30a040" stroke="#104010" stroke-width="0.6"/><rect x="5.6" y="0.8" width="3.8" height="8" fill="#e04040" stroke="#801010" stroke-width="0.5"/><path d="M1.6,5.2 l2.6,1.4 l-2.6,1.4 z" fill="#e8e020"/></svg>
<div class="a" style="left:824.2px;top:41.6px;width:11.8px;height:12px;background:#ebe9e4;border:1px solid;border-color:#808080 #fff #fff #808080;box-sizing:border-box"></div>
<svg class="a" style="left:825.2px;top:43px" width="10" height="10" viewBox="0 0 10 10"><path d="M1.4,9 V2.4 h3 V9 M5.4,9 l3,-6.4 M5.4,3 h3.6" fill="none" stroke="#8c8a84" stroke-width="1.3"/></svg>
<svg class="a" style="left:837.4px;top:43px" width="10" height="10" viewBox="0 0 10 10"><path d="M1.4,9 V2.4 h3 V9 M5.4,9 l3,-6.4 M5.4,3 h3.6" fill="none" stroke="#8c8a84" stroke-width="1.3"/></svg>
<svg class="a" style="left:850px;top:48.5px" width="5" height="4"><path d="M0,0 h5 l-2.5,3 z" fill="#202020"/></svg>
<div class="a" style="left:855.5px;top:42px;width:1px;height:12px;background:#a09e98"></div>
<div class="a" style="left:0;top:69.3px;width:111.5px;height:9.4px;background:#808080"></div>
<div class="t" style="left:2.9px;top:70.57px;font-size:7.6px;color:#d6d6d6;transform-origin:0 0;transform:scaleX(0.849);">Menübaum</div>
<svg class="a" style="left:93px;top:70.5px" width="17" height="8"><path d="M2.5,1 h3 v3.5 h-3 z M1.5,4.8 h5 M4,4.8 v2.5" fill="none" stroke="#fff" stroke-width="0.9"/><path d="M11,1 l5,5.5 M16,1 l-5,5.5" stroke="#fff" stroke-width="1.1"/></svg>
<div class="a" style="left:1.3px;top:81.3px;width:109.5px;height:596.5px;background:#fff;border:1px solid;border-color:#6a6a6a #e8e6e0 #e8e6e0 #6a6a6a;box-sizing:border-box"></div>
<div class="a" style="left:2.3px;top:82.3px;width:107.5px;height:1px;background:#5a5a5a"></div>
<div class="a" style="left:2.3px;top:82.3px;width:1px;height:594.5px;background:#5a5a5a"></div>
<div class="t" style="left:27.0px;top:84.62px;font-size:7.3px;color:#101010;transform-origin:0 0;transform:scaleX(0.827);">Projekt</div>
<div class="a" style="left:9px;top:88.5px;width:7px;height:1px;background:#c8c8c8"></div>
<div class="t" style="left:27.0px;top:94.22px;font-size:7.3px;color:#101010;transform-origin:0 0;transform:scaleX(0.803);">Linienraster und Geschosse</div>
<div class="a" style="left:9px;top:98.1px;width:7px;height:1px;background:#c8c8c8"></div>
<div class="t" style="left:27.0px;top:103.82px;font-size:7.3px;color:#101010;transform-origin:0 0;transform:scaleX(0.822);">Struktur</div>
<div class="a" style="left:9px;top:107.7px;width:7px;height:1px;background:#c8c8c8"></div>
<div class="t" style="left:27.0px;top:113.42px;font-size:7.3px;color:#101010;transform-origin:0 0;transform:scaleX(0.816);">Belastung</div>
<div class="a" style="left:9px;top:117.3px;width:7px;height:1px;background:#c8c8c8"></div>
<div class="t" style="left:27.0px;top:123.02px;font-size:7.3px;color:#101010;transform-origin:0 0;transform:scaleX(0.803);">Lastfälle, LF-Kombinationen</div>
<div class="a" style="left:12px;top:126.9px;width:4px;height:1px;background:#c8c8c8"></div>
<div class="a" style="left:6.5px;top:124.4px;width:5px;height:5px;border:1px solid #808080;background:#fff;box-sizing:border-box"></div>
<div class="a" style="left:7.5px;top:126.4px;width:3px;height:1px;background:#202020"></div>
<div class="a" style="left:8.5px;top:125.4px;width:1px;height:3px;background:#202020"></div>
<div class="t" style="left:27.0px;top:132.62px;font-size:7.3px;color:#101010;transform-origin:0 0;transform:scaleX(0.812);">Berechnung, FE-Netz</div>
<div class="a" style="left:12px;top:136.5px;width:4px;height:1px;background:#c8c8c8"></div>
<div class="a" style="left:6.5px;top:134.0px;width:5px;height:5px;border:1px solid #808080;background:#fff;box-sizing:border-box"></div>
<div class="a" style="left:7.5px;top:136.0px;width:3px;height:1px;background:#202020"></div>
<div class="a" style="left:8.5px;top:135.0px;width:1px;height:3px;background:#202020"></div>
<div class="t" style="left:27.0px;top:142.22px;font-size:7.3px;color:#101010;transform-origin:0 0;transform:scaleX(0.841);">Stahl</div>
<div class="a" style="left:9px;top:146.1px;width:7px;height:1px;background:#c8c8c8"></div>
<div class="t" style="left:27.0px;top:151.82px;font-size:7.3px;color:#101010;transform-origin:0 0;transform:scaleX(0.839);">Beton</div>
<div class="a" style="left:9px;top:155.7px;width:7px;height:1px;background:#c8c8c8"></div>
<div class="t" style="left:27.0px;top:161.42px;font-size:7.3px;color:#101010;transform-origin:0 0;transform:scaleX(0.827);">Dokument</div>
<div class="a" style="left:9px;top:165.3px;width:7px;height:1px;background:#c8c8c8"></div>
<div class="t" style="left:27.0px;top:171.02px;font-size:7.3px;color:#101010;transform-origin:0 0;transform:scaleX(0.828);">Zeichnungswerkzeuge</div>
<div class="a" style="left:12px;top:174.9px;width:4px;height:1px;background:#c8c8c8"></div>
<div class="a" style="left:6.5px;top:172.4px;width:5px;height:5px;border:1px solid #808080;background:#fff;box-sizing:border-box"></div>
<div class="a" style="left:7.5px;top:174.4px;width:3px;height:1px;background:#202020"></div>
<div class="a" style="left:8.5px;top:173.4px;width:1px;height:3px;background:#202020"></div>
<div class="t" style="left:27.0px;top:180.62px;font-size:7.3px;color:#101010;transform-origin:0 0;transform:scaleX(0.830);">Bibliotheken</div>
<div class="a" style="left:12px;top:184.5px;width:4px;height:1px;background:#c8c8c8"></div>
<div class="a" style="left:6.5px;top:182.0px;width:5px;height:5px;border:1px solid #808080;background:#fff;box-sizing:border-box"></div>
<div class="a" style="left:7.5px;top:184.0px;width:3px;height:1px;background:#202020"></div>
<div class="a" style="left:8.5px;top:183.0px;width:1px;height:3px;background:#202020"></div>
<div class="t" style="left:27.0px;top:190.22px;font-size:7.3px;color:#101010;transform-origin:0 0;transform:scaleX(0.843);">Werkzeuge</div>
<div class="a" style="left:12px;top:194.1px;width:4px;height:1px;background:#c8c8c8"></div>
<div class="a" style="left:6.5px;top:191.6px;width:5px;height:5px;border:1px solid #808080;background:#fff;box-sizing:border-box"></div>
<div class="a" style="left:7.5px;top:193.6px;width:3px;height:1px;background:#202020"></div>
<div class="a" style="left:8.5px;top:192.6px;width:1px;height:3px;background:#202020"></div>
<div class="a" style="left:9px;top:85px;width:1px;height:108px;background:#d0d0d0"></div>
<div class="a" style="left:110.6px;top:80.8px;width:1.1px;height:597.5px;background:#505050"></div>
<div class="a" style="left:1.3px;top:677.5px;width:110.4px;height:0.9px;background:#8a8884"></div>
<svg class="a" style="left:15px;top:83.7px" width="9" height="9" viewBox="0 0 10 10"><rect x="1.2" y="1.5" width="7.8" height="7.8" fill="#fff" stroke="#20206a" stroke-width="1"/><path d="M1,1.2 h8.2" stroke="#3040e0" stroke-width="1.2"/><path d="M3,8 L7.3,3.4" stroke="#303030" stroke-width="1"/></svg>
<svg class="a" style="left:15px;top:93.3px" width="9" height="9" viewBox="0 0 10 10"><path d="M3.4,0.8 v8.6 M6.8,0.8 v8.6 M0.6,3.4 h9 M0.6,6.8 h9" stroke="#4050e8" stroke-width="0.9" fill="none"/></svg>
<svg class="a" style="left:15px;top:102.9px" width="9" height="9" viewBox="0 0 10 10"><path d="M1.2,9.2 V3.2 H8.8 V9.2 M5,3.2 V1.2 M3,3.2 v1.6 M7,3.2 v1.6" stroke="#202020" stroke-width="1.1" fill="none"/></svg>
<svg class="a" style="left:15px;top:112.5px" width="9" height="9" viewBox="0 0 10 10"><rect x="1.8" y="0.8" width="2" height="7" fill="#2838c8"/><path d="M0.3,8.6 h9.4" stroke="#202020" stroke-width="1.1"/><path d="M4.8,7.8 v-2 h1.6 v-1.2 h1.8 v3.2" stroke="#606060" stroke-width="0.8" fill="#c8c8c8"/></svg>
<svg class="a" style="left:15px;top:122.1px" width="9" height="9" viewBox="0 0 10 10"><rect x="1.6" y="0.8" width="2" height="7" fill="#2838c8"/><path d="M0.3,8.6 h9.4" stroke="#202020" stroke-width="1.1"/><circle cx="7" cy="2.6" r="1.5" fill="none" stroke="#202020" stroke-width="0.9"/><path d="M5.2,7.8 q1.8,-4.5 3.6,0 z" fill="#202020"/></svg>
<svg class="a" style="left:15px;top:131.7px" width="9" height="9" viewBox="0 0 10 10"><rect x="1.4" y="0.6" width="7.2" height="8.8" rx="0.8" fill="#d8d8b8" stroke="#303868" stroke-width="0.9"/><rect x="2.2" y="1.2" width="5.6" height="2" fill="#3858d0"/><rect x="2.6" y="4.4" width="4.8" height="3.8" fill="#f4f4e8"/></svg>
<svg class="a" style="left:15px;top:141.3px" width="9" height="9" viewBox="0 0 10 10"><path d="M2,0.6 h2.4 v3 h5 v2.4 h-5 v3.6 h-2.4 z" fill="#d0b828" stroke="#605010" stroke-width="0.7"/></svg>
<svg class="a" style="left:15px;top:150.9px" width="9" height="9" viewBox="0 0 10 10"><path d="M0.6,1 h8.8 v3 h-2.6 v5.4 h-3.6 v-5.4 h-2.6 z" fill="#28c4e4" stroke="#107088" stroke-width="0.7"/></svg>
<svg class="a" style="left:15px;top:160.5px" width="9" height="9" viewBox="0 0 10 10"><path d="M0.8,2 q2.2,-1.4 4.2,0.2 q2,-1.6 4.2,-0.2 v6.6 q-2.2,-1.2 -4.2,0.4 q-2,-1.6 -4.2,-0.4 z" fill="#e8dc98" stroke="#282818" stroke-width="0.8"/><path d="M5,2.2 v6.8" stroke="#282818" stroke-width="0.7"/><rect x="5.8" y="3.2" width="2.4" height="3.6" fill="#fff" stroke="#505050" stroke-width="0.4"/></svg>
<svg class="a" style="left:15px;top:170.1px" width="9" height="9" viewBox="0 0 10 10"><path d="M1.2,9 v-6 M3.2,9 v-3.6 M5.2,9 v-5 M0.4,9.2 h9.2" stroke="#3048c8" stroke-width="1.1"/><path d="M2,6 L8.6,0.8" stroke="#20a050" stroke-width="1.2"/><path d="M7,9 v-4" stroke="#3048c8" stroke-width="1.1"/></svg>
<svg class="a" style="left:15px;top:179.7px" width="9" height="9" viewBox="0 0 10 10"><rect x="2" y="0.6" width="6" height="8.8" rx="1" fill="#585858" stroke="#202020" stroke-width="0.6"/><path d="M2.2,3.2 h5.6 M2.2,6 h5.6" stroke="#c8c8c8" stroke-width="0.9"/><path d="M2,1 h6" stroke="#2040c0" stroke-width="0.8"/></svg>
<svg class="a" style="left:15px;top:189.3px" width="9" height="9" viewBox="0 0 10 10"><path d="M1,1 L9,9" stroke="#202020" stroke-width="1.5"/><path d="M9,1 L1,9" stroke="#c8a820" stroke-width="1.5"/><path d="M0.6,2.6 L2.6,0.6" stroke="#3050c0" stroke-width="1.4"/><circle cx="8.4" cy="1.6" r="1.1" fill="#404040"/></svg>
<div class="raise" style="left:3.5px;top:678px;width:16.5px;height:11px;border-top:none;background:#e6e3dc"></div>
<svg class="a" style="left:7px;top:680px" width="8" height="7"><rect x="0.5" y="0.5" width="3" height="2.5" fill="none" stroke="#2030c0" stroke-width="0.8"/><rect x="3.5" y="3.5" width="3.5" height="2.8" fill="#c02020"/><path d="M2,3 v2 h1.5" stroke="#404040" stroke-width="0.7" fill="none"/></svg>
<div class="a" style="left:112px;top:69px;width:3px;height:620px;background:#d4d0c8"></div>
<div class="a" style="left:0;top:67px;width:960px;height:1.6px;background:#e2dfd8"></div>
<div class="a" style="left:114px;top:68.7px;width:837px;height:559.8px;background:#fff;border-left:1px solid #5c5a54;border-top:1px solid #4a4844;box-sizing:border-box"></div>
<div class="a" style="left:951px;top:68px;width:9px;height:560px;background:#eceae4"></div>
<div class="raise" style="left:951px;top:69px;width:9px;height:9.5px"></div>
<svg class="a" style="left:953px;top:72px" width="5" height="4"><path d="M0,3.5 h5 l-2.5,-3 z" fill="#202020"/></svg>
<div class="raise" style="left:951px;top:304px;width:9px;height:10px"></div>
<div class="raise" style="left:951px;top:525px;width:9px;height:9px"></div>
<svg class="a" style="left:953px;top:528px" width="5" height="4"><path d="M0,0.5 h5 l-2.5,3 z" fill="#202020"/></svg>
<div class="a" style="left:951px;top:534px;width:9px;height:94px;background:linear-gradient(90deg,#2a2a2a 0,#2a2a2a 22%,#5c5c5c 35%,#606060 75%,#2a2a2a 88%)"></div>
<div class="a" style="left:117.4px;top:67.4px;width:77.8px;height:57px;background:#d4d0c8;border:1px solid;border-color:#f4f2ee #6c6a64 #6c6a64 #f4f2ee;box-sizing:border-box"></div>
<div class="a" style="left:118.8px;top:69px;width:74.5px;height:9.2px;background:#0a246a"></div>
<div class="t" style="left:120.0px;top:69.68px;font-size:7.7px;color:#fff;font-weight:bold;transform-origin:0 0;transform:scaleX(0.758);">Ansicht</div>
<svg class="a" style="left:175px;top:70.6px" width="18" height="7"><path d="M0.5,1.5 h6 l-3,3.5 z" fill="#fff"/><path d="M11.5,0.8 l4.5,5 M16,0.8 l-4.5,5" stroke="#fff" stroke-width="1.1"/></svg>
<svg class="a" style="left:120.5px;top:81px" width="11" height="11" viewBox="0 0 10 10"><ellipse cx="5" cy="6.6" rx="3.4" ry="2.7" fill="#20b8b0" stroke="#203838" stroke-width="0.9"/><ellipse cx="5" cy="7" rx="1.5" ry="0.9" fill="#e8ffff"/><path d="M3.2,0.6 L4.6,4.2" stroke="#d02020" stroke-width="1.1"/><path d="M5.6,0.8 v3.6" stroke="#2030c0" stroke-width="1"/></svg>
<svg class="a" style="left:132.8px;top:81px" width="11" height="11" viewBox="0 0 10 10"><ellipse cx="5" cy="6.6" rx="3.4" ry="2.7" fill="#20b8b0" stroke="#203838" stroke-width="0.9"/><ellipse cx="5" cy="7" rx="1.5" ry="0.9" fill="#e8ffff"/><path d="M3.2,0.6 L4.6,4.2" stroke="#d02020" stroke-width="1.1"/><path d="M5.6,0.8 v3.6" stroke="#2030c0" stroke-width="1"/></svg>
<svg class="a" style="left:145.10000000000002px;top:81px" width="11" height="11" viewBox="0 0 10 10"><ellipse cx="5" cy="6.6" rx="3.4" ry="2.7" fill="#20b8b0" stroke="#203838" stroke-width="0.9"/><ellipse cx="5" cy="7" rx="1.5" ry="0.9" fill="#e8ffff"/><path d="M3.2,0.6 L4.6,4.2" stroke="#d02020" stroke-width="1.1"/><path d="M5.6,0.8 v3.6" stroke="#2030c0" stroke-width="1"/></svg>
<svg class="a" style="left:157.40000000000003px;top:81px" width="11" height="11" viewBox="0 0 10 10"><ellipse cx="5" cy="6.6" rx="3.4" ry="2.7" fill="#20b8b0" stroke="#203838" stroke-width="0.9"/><ellipse cx="5" cy="7" rx="1.5" ry="0.9" fill="#e8ffff"/><path d="M3.2,0.6 L4.6,4.2" stroke="#d02020" stroke-width="1.1"/><path d="M5.6,0.8 v3.6" stroke="#2030c0" stroke-width="1"/></svg>
<svg class="a" style="left:170.6px;top:80.6px" width="10" height="10" viewBox="0 0 10 10"><path d="M3.4,8 V1.4 M2,3 L3.4,1.2 L4.8,3" fill="none" stroke="#2838c8" stroke-width="1.2"/><path d="M3.4,5 h3" stroke="#d03030" stroke-width="1"/><circle cx="7.2" cy="5" r="1.5" fill="#e04040"/><path d="M1,8.6 h6" stroke="#d03030" stroke-width="0.9"/><path d="M1.6,9.2 h3" stroke="#20a898" stroke-width="0.8"/></svg>
<svg class="a" style="left:182px;top:80.5px" width="11" height="11" viewBox="0 0 10 10"><circle cx="4.2" cy="4.2" r="3" fill="#b0ece4" stroke="#202020" stroke-width="0.9"/><path d="M1.6,3 A3,3 0 0 1 6.8,3" fill="none" stroke="#d04040" stroke-width="0.9"/><path d="M6.4,6.4 L9.3,9.3" stroke="#202020" stroke-width="1.5"/></svg>
<svg class="a" style="left:120.5px;top:95.5px" width="11" height="11" viewBox="0 0 10 10"><circle cx="4.2" cy="4.2" r="3" fill="#b0ece4" stroke="#202020" stroke-width="0.9"/><path d="M1.6,3 A3,3 0 0 1 6.8,3" fill="none" stroke="#d04040" stroke-width="0.9"/><path d="M6.4,6.4 L9.3,9.3" stroke="#202020" stroke-width="1.5"/></svg>
<svg class="a" style="left:132.8px;top:95.5px" width="11" height="11" viewBox="0 0 10 10"><circle cx="4.2" cy="4.2" r="3" fill="#b0ece4" stroke="#202020" stroke-width="0.9"/><path d="M1.6,3 A3,3 0 0 1 6.8,3" fill="none" stroke="#d04040" stroke-width="0.9"/><path d="M6.4,6.4 L9.3,9.3" stroke="#202020" stroke-width="1.5"/></svg>
<svg class="a" style="left:145.10000000000002px;top:95.5px" width="11" height="11" viewBox="0 0 10 10"><circle cx="4.2" cy="4.2" r="3" fill="#b0ece4" stroke="#202020" stroke-width="0.9"/><path d="M1.6,3 A3,3 0 0 1 6.8,3" fill="none" stroke="#d04040" stroke-width="0.9"/><path d="M6.4,6.4 L9.3,9.3" stroke="#202020" stroke-width="1.5"/></svg>
<svg class="a" style="left:157.5px;top:95.5px" width="11" height="11" viewBox="0 0 10 10"><circle cx="4" cy="4" r="3" fill="#f0f0f0" stroke="#a0a0a0" stroke-width="1"/><path d="M6.2,6.2 L9.3,9.3" stroke="#a0a0a0" stroke-width="1.6"/></svg>
<svg class="a" style="left:170px;top:96px" width="10" height="10" viewBox="0 0 10 10"><path d="M1,3.5 l3,-2.5 h5 v5.5 l-3,2.5 h-5 z" fill="#e8d820" stroke="#202020" stroke-width="0.8"/><path d="M1,3.5 h5 v5.5 M6,3.5 l3,-2.5" fill="none" stroke="#202020" stroke-width="0.7"/></svg>
<svg class="a" style="left:183px;top:95.5px" width="9" height="11"><circle cx="4.5" cy="4" r="2.8" fill="#f0e020" stroke="#504000" stroke-width="0.7"/><rect x="3.2" y="6.8" width="2.6" height="3" fill="#404040"/></svg>
<div class="a" style="left:120px;top:107.3px;width:72px;height:0.8px;background:#a8a6a0;border-bottom:0.8px solid #f2f0ea"></div>
<svg class="a" style="left:120.8px;top:111.4px" width="10" height="10" viewBox="0 0 10 10"><rect x="0.8" y="3.2" width="6.8" height="6" fill="#f0f0f8" stroke="#203090" stroke-width="0.9"/><path d="M0.8,3.6 h6.8" stroke="#203090" stroke-width="1.4"/><rect x="2" y="5.6" width="1.8" height="2.4" fill="#d03030"/><rect x="4.6" y="5.6" width="1.8" height="2.4" fill="#d03030"/><path d="M6,2 q2.6,-1.6 3.2,1.6 M8.2,3 l1,0.8 l0.6,-1.2" fill="none" stroke="#3858c0" stroke-width="0.8"/></svg>
<svg class="a" style="left:133.4px;top:111.4px" width="10" height="10" viewBox="0 0 10 10"><rect x="1.6" y="4" width="6.8" height="5.2" fill="#dcdad4" stroke="#a8a6a0" stroke-width="0.9"/><path d="M3,4 q0,-3 3,-2.4 M5,1 l1.2,0.6 l-0.8,1" fill="none" stroke="#a8a6a0" stroke-width="0.8"/><path d="M3,6.4 h4" stroke="#a8a6a0" stroke-width="0.8"/></svg>
<div class="sep" style="left:146px;top:110px;height:12px"></div>
<svg class="a" style="left:150px;top:111px" width="11" height="11"><rect x="0.6" y="0.6" width="9.5" height="9.5" fill="#e8d820" stroke="#303030" stroke-width="0.9"/><text x="2" y="8.9" font-size="9.5" font-weight="bold" fill="#202020" font-family="Liberation Sans, sans-serif">C</text></svg>
<svg class="a" style="left:162px;top:111px" width="11" height="11"><path d="M0.6,3 l2.5,-2.4 h7 v7 l-2.5,2.4 h-7 z" fill="#3040d0" stroke="#101050" stroke-width="0.8"/><rect x="2" y="4.2" width="4" height="4.5" fill="#f0f0f0"/></svg>
<div class="a" style="left:114px;top:628px;width:846px;height:14px;background:#d4d0c8"></div>
<div class="a" style="left:116.5px;top:629.3px;width:10.6px;height:11.6px;background:#eceae4;border:1px solid;border-color:#807e78 #fff #fff #807e78;box-sizing:border-box"></div>
<svg class="a" style="left:117.1px;top:630.3px" width="9.6" height="9.6" viewBox="0 0 10 10"><path d="M1.5,4 l2.5,-2.5 h4.5 v4.5 l-2.5,2.5 h-4.5 z M1.5,4 h4.5 v4.5 M6,4 l2.5,-2.5" fill="none" stroke="#101010" stroke-width="1"/></svg>
<div class="a" style="left:128.2px;top:629.3px;width:10.6px;height:11.6px;background:#eceae4;border:1px solid;border-color:#807e78 #fff #fff #807e78;box-sizing:border-box"></div>
<svg class="a" style="left:128.79999999999998px;top:630.3px" width="9.6" height="9.6" viewBox="0 0 10 10"><path d="M1.5,4 l2.5,-2.5 h4.5 v4.5 l-2.5,2.5 h-4.5 z" fill="#d8d020" stroke="#101010" stroke-width="0.9"/><path d="M1.5,4 h4.5 v4.5 M6,4 l2.5,-2.5" fill="none" stroke="#101010" stroke-width="0.7"/></svg>
<div class="a" style="left:142px;top:629.3px;width:10.6px;height:11.6px;background:#eceae4;border:1px solid;border-color:#807e78 #fff #fff #807e78;box-sizing:border-box"></div>
<svg class="a" style="left:142.6px;top:630.3px" width="9.6" height="9.6" viewBox="0 0 10 10"><path d="M5,2.6 L1.6,8 h6.8 z" fill="#fff" stroke="#2838c8" stroke-width="1"/><circle cx="5" cy="1.8" r="1.1" fill="#202020"/><path d="M0.6,9 h8.8" stroke="#2838c8" stroke-width="1"/></svg>
<div class="a" style="left:154.2px;top:629.3px;width:10.6px;height:11.6px;background:#eceae4;border:1px solid;border-color:#807e78 #fff #fff #807e78;box-sizing:border-box"></div>
<svg class="a" style="left:154.79999999999998px;top:630.3px" width="9.6" height="9.6" viewBox="0 0 10 10"><rect x="1.4" y="0.8" width="1.8" height="7.4" fill="#2838c8"/><path d="M0.4,8.8 h9.2" stroke="#202020" stroke-width="1"/><path d="M4.2,8 v-1.8 h1.8 v-1.4 h2.4 v3.2" fill="#c8a040" stroke="#604020" stroke-width="0.7"/></svg>
<div class="a" style="left:166.4px;top:629.3px;width:10.6px;height:11.6px;background:#eceae4;border:1px solid;border-color:#807e78 #fff #fff #807e78;box-sizing:border-box"></div>
<svg class="a" style="left:167.0px;top:630.3px" width="9.6" height="9.6" viewBox="0 0 10 10"><path d="M1.4,9 V1 " stroke="#2838c8" stroke-width="1.2"/><rect x="2.6" y="1" width="6" height="3.4" fill="#e85050" stroke="#a02020" stroke-width="0.6"/><path d="M1.4,7.6 h7" stroke="#2838c8" stroke-width="1"/></svg>
<div class="a" style="left:180.4px;top:629.3px;width:10.6px;height:11.6px;background:#eceae4;border:1px solid;border-color:#807e78 #fff #fff #807e78;box-sizing:border-box"></div>
<svg class="a" style="left:181.0px;top:630.3px" width="9.6" height="9.6" viewBox="0 0 10 10"><path d="M0.6,1 h8.8 v3.6 h-8.8 z" fill="#e8e8e8"/><text x="0.5" y="4" font-size="4" font-weight="bold" fill="#101010" font-family="Liberation Sans, sans-serif" textLength="9" lengthAdjust="spacingAndGlyphs">ABC</text><path d="M0.8,7 h8.4" stroke="#2838c8" stroke-width="1.2"/><rect x="4" y="5.6" width="2" height="2.8" fill="#2838c8"/></svg>
<div class="a" style="left:192.6px;top:629.3px;width:10.6px;height:11.6px;background:#eceae4;border:1px solid;border-color:#807e78 #fff #fff #807e78;box-sizing:border-box"></div>
<svg class="a" style="left:193.2px;top:630.3px" width="9.6" height="9.6" viewBox="0 0 10 10"><text x="0.5" y="4" font-size="4" font-weight="bold" fill="#101010" font-family="Liberation Sans, sans-serif" textLength="9" lengthAdjust="spacingAndGlyphs">ABC</text><path d="M1,6 h6.5 l1.5,1.6 l-1.5,1.6 h-6.5 z" fill="#d8c828" stroke="#403808" stroke-width="0.7"/></svg>
<div class="a" style="left:206.7px;top:629.3px;width:10.6px;height:11.6px;background:#eceae4;border:1px solid;border-color:#807e78 #fff #fff #807e78;box-sizing:border-box"></div>
<svg class="a" style="left:207.29999999999998px;top:630.3px" width="9.6" height="9.6" viewBox="0 0 10 10"><path d="M5,1 L1,8.6 h8 z M3,4.8 h4 M5,1 v7.6 M3,4.8 l2,3.8 l2,-3.8" fill="none" stroke="#d04040" stroke-width="0.7"/><path d="M1,8.6 h8" stroke="#30a040" stroke-width="0.9"/><circle cx="5" cy="1.2" r="0.9" fill="#30a040"/></svg>
<div class="a" style="left:220.6px;top:629.3px;width:10.6px;height:11.6px;background:#eceae4;border:1px solid;border-color:#807e78 #fff #fff #807e78;box-sizing:border-box"></div>
<svg class="a" style="left:221.2px;top:630.3px" width="9.6" height="9.6" viewBox="0 0 10 10"><path d="M2,1 v6.5 q0,1.4 -1.4,1 M4.6,1 v8 M7,1 v8 M1,1 h7.6" stroke="#101010" stroke-width="1.1" fill="none"/><rect x="4.6" y="2" width="2.4" height="6" fill="#909090"/></svg>
<div class="a" style="left:234px;top:629.3px;width:10.6px;height:11.6px;background:#eceae4;border:1px solid;border-color:#807e78 #fff #fff #807e78;box-sizing:border-box"></div>
<svg class="a" style="left:234.6px;top:630.3px" width="9.6" height="9.6" viewBox="0 0 10 10"><rect x="0.8" y="2.4" width="6.4" height="6.8" fill="#d8d020" stroke="#2838c8" stroke-width="1"/><rect x="4.6" y="0.8" width="4.6" height="5.4" fill="#8090e0" stroke="#2838c8" stroke-width="0.8"/><path d="M0.8,5.6 h6.4 M4,2.4 v6.8" stroke="#2838c8" stroke-width="0.8"/></svg>
<div class="a" style="left:246.8px;top:629.3px;width:10.6px;height:11.6px;background:#eceae4;border:1px solid;border-color:#807e78 #fff #fff #807e78;box-sizing:border-box"></div>
<svg class="a" style="left:247.4px;top:630.3px" width="9.6" height="9.6" viewBox="0 0 10 10"><rect x="1.4" y="1.4" width="4" height="7.4" fill="#dcdad4" stroke="#a8a6a0" stroke-width="0.8"/><path d="M6.4,2 h2.6 M6.4,4 h2.6 M7.6,1.4 v7" stroke="#a8a6a0" stroke-width="0.8"/></svg>
<div class="raise" style="left:259px;top:629.3px;width:8px;height:11.6px"></div>
<svg class="a" style="left:261px;top:632px" width="4" height="6"><path d="M3.5,0.5 v5 l-3,-2.5 z" fill="#202020"/></svg>
<div class="a" style="left:268px;top:629px;width:508px;height:12px;background:#ebe9e4"></div>
<div class="raise" style="left:521px;top:629px;width:10px;height:12px"></div>
<div class="raise" style="left:768.5px;top:629.3px;width:8.5px;height:11.6px"></div>
<svg class="a" style="left:771px;top:632px" width="4" height="6"><path d="M0.5,0.5 v5 l3,-2.5 z" fill="#202020"/></svg>
<div class="a" style="left:777px;top:628.5px;width:174.3px;height:12.3px;background:#3a3a3a"></div>
<div class="a" style="left:778.5px;top:630px;width:85px;height:9.3px;box-sizing:border-box;border:1px solid #8a8a8a;background:linear-gradient(90deg,#2c2c2c 0,#4c4c4c 45%,#565656 52%,#2c2c2c 100%)"></div>
<div class="a" style="left:866.5px;top:630px;width:83.5px;height:9.3px;box-sizing:border-box;border:1px solid #8a8a8a;background:linear-gradient(90deg,#2c2c2c 0,#4c4c4c 45%,#565656 52%,#2c2c2c 100%)"></div>
<div class="a" style="left:951.3px;top:628.5px;width:9px;height:12.5px;background:#e8e6e0"></div>
<div class="a" style="left:114px;top:645.5px;width:846px;height:10px;background:#808080"></div>
<div class="t" style="left:116.6px;top:646.54px;font-size:7.4px;color:#dedede;transform-origin:0 0;transform:scaleX(0.845);">Befehlszeile</div>
<svg class="a" style="left:942px;top:647px" width="17" height="8"><path d="M2.5,1 h3 v3.5 h-3 z M1.5,4.8 h5 M4,4.8 v2.5" fill="none" stroke="#fff" stroke-width="0.9"/><path d="M10.5,1 l5,5.5 M15.5,1 l-5,5.5" stroke="#fff" stroke-width="1.1"/></svg>
<div class="raise" style="left:115.5px;top:658.5px;width:13px;height:13px;border-color:#fff #8c8a84 #8c8a84 #fff"></div>
<svg class="a" style="left:119px;top:661px" width="7" height="9"><path d="M1,0.5 v6.5 l1.8,-1.6 l1.3,2.8 l1,-0.5 l-1.3,-2.6 h2.2 z" fill="#e8e6e0" stroke="#a09e98" stroke-width="0.7"/></svg>
<div class="a" style="left:118.5px;top:676.8px;width:840.5px;height:10.8px;background:#fff;border:1px solid;border-color:#404040 #fff #fff #404040;box-sizing:border-box"></div>
<div class="t" style="left:121.6px;top:678.62px;font-size:7.3px;color:#101010;transform-origin:0 0;transform:scaleX(0.793);">Befehl &gt;</div>
<svg class="a" style="left:693px;top:660.5px" width="10" height="10" viewBox="0 0 10 10"><path d="M1.5,1.5 L8,8.5" stroke="#b4b2ac" stroke-width="0.9"/><circle cx="1.8" cy="1.8" r="0.9" fill="#b4b2ac"/></svg>
<svg class="a" style="left:704.5px;top:660.5px" width="10" height="10" viewBox="0 0 10 10"><path d="M1.5,1.5 L8,8.5" stroke="#b4b2ac" stroke-width="0.9"/><circle cx="5" cy="5" r="1" fill="#b4b2ac"/></svg>
<svg class="a" style="left:717px;top:660.5px" width="10" height="10" viewBox="0 0 10 10"><circle cx="5" cy="5.5" r="2.8" fill="none" stroke="#b4b2ac" stroke-width="0.9"/><path d="M5,5.5 h3" stroke="#b4b2ac" stroke-width="0.8"/></svg>
<svg class="a" style="left:729.5px;top:660.5px" width="10" height="10" viewBox="0 0 10 10"><path d="M1.5,1.5 L8.5,8.5 M8.5,1.5 L1.5,8.5" stroke="#b4b2ac" stroke-width="0.9"/></svg>
<svg class="a" style="left:746.5px;top:660.5px" width="10" height="10" viewBox="0 0 10 10"><path d="M1,8.5 L5,2 L9,8.5" fill="none" stroke="#b4b2ac" stroke-width="0.9"/></svg>
<svg class="a" style="left:758.5px;top:660.5px" width="10" height="10" viewBox="0 0 10 10"><path d="M1.5,8.5 L8,2.5 M5.5,2 h3 v3" fill="none" stroke="#b4b2ac" stroke-width="0.9"/></svg>
<svg class="a" style="left:771px;top:660.5px" width="10" height="10" viewBox="0 0 10 10"><path d="M1,2 h7 L4.5,8.5 z" fill="none" stroke="#b4b2ac" stroke-width="0.9"/></svg>
<svg class="a" style="left:783.5px;top:660.5px" width="10" height="10" viewBox="0 0 10 10"><path d="M1,8 L8.5,3 M6,2.5 l2.8,0.4 l-1,2.4" fill="none" stroke="#b4b2ac" stroke-width="0.9"/></svg>
<div class="sep" style="left:742.5px;top:659.5px;height:12px"></div>
<div class="sep" style="left:796.5px;top:659.5px;height:12px"></div>
<svg class="a" style="left:801.2px;top:660.5px" width="10" height="10" viewBox="0 0 10 10"><path d="M2,1.5 L8,8.5" stroke="#202020" stroke-width="0.9"/><path d="M3,5.6 h5.6 M5.4,3 l-2.6,2.6 l2.6,2.6" fill="none" stroke="#2838d0" stroke-width="1.3"/><rect x="6.4" y="0.6" width="3" height="3" fill="#2838d0"/></svg>
<svg class="a" style="left:813.8px;top:660.5px" width="10" height="10" viewBox="0 0 10 10"><path d="M1,1.4 h8 M1,3.8 h8 M1,6.2 h8 M1,8.6 h8" stroke="#202020" stroke-width="1" stroke-dasharray="1 1.3"/></svg>
<svg class="a" style="left:826.4px;top:660.5px" width="10" height="10" viewBox="0 0 10 10"><path d="M1,2 h8 M5,2 v6.5 M1,8.6 h8" stroke="#202020" stroke-width="1" fill="none"/><path d="M3,2 v4 M7,2 v4" stroke="#d02020" stroke-width="1"/><path d="M1,8.6 h8" stroke="#2838d0" stroke-width="1"/></svg>
<svg class="a" style="left:839px;top:660.5px" width="10" height="10" viewBox="0 0 10 10"><path d="M1,1 L9,9" stroke="#202020" stroke-width="1"/><path d="M9,1 L1,9" stroke="#20a020" stroke-width="1.2"/><circle cx="5" cy="5" r="1.3" fill="#d02020"/></svg>
<div class="a" style="left:850.2px;top:659.3px;width:11.6px;height:12.2px;background:#f0eeea;border:1px solid;border-color:#807e78 #fff #fff #807e78;box-sizing:border-box"></div>
<svg class="a" style="left:851px;top:660.5px" width="10" height="10" viewBox="0 0 10 10"><path d="M1.5,1.5 L8.5,8.8" stroke="#202020" stroke-width="1"/><circle cx="2.2" cy="2.2" r="1.4" fill="#d02020"/></svg>
<div class="a" style="left:862.8000000000001px;top:659.3px;width:11.6px;height:12.2px;background:#f0eeea;border:1px solid;border-color:#807e78 #fff #fff #807e78;box-sizing:border-box"></div>
<svg class="a" style="left:863.6px;top:660.5px" width="10" height="10" viewBox="0 0 10 10"><path d="M1.5,1 L8.5,9" stroke="#202020" stroke-width="1"/><circle cx="4.4" cy="4.2" r="1.4" fill="#d02020"/></svg>
<div class="a" style="left:875.4000000000001px;top:659.3px;width:11.6px;height:12.2px;background:#f0eeea;border:1px solid;border-color:#807e78 #fff #fff #807e78;box-sizing:border-box"></div>
<svg class="a" style="left:876.2px;top:660.5px" width="10" height="10" viewBox="0 0 10 10"><path d="M1.5,1.5 L8.5,8.5 M8.5,1.5 L1.5,8.5" stroke="#202020" stroke-width="1"/><circle cx="5" cy="5" r="1.3" fill="#d02020"/></svg>
<div class="a" style="left:888.0px;top:659.3px;width:11.6px;height:12.2px;background:#f0eeea;border:1px solid;border-color:#807e78 #fff #fff #807e78;box-sizing:border-box"></div>
<svg class="a" style="left:888.8px;top:660.5px" width="10" height="10" viewBox="0 0 10 10"><path d="M1,2 h7.6 L4.6,8.8 z" fill="none" stroke="#202020" stroke-width="1"/><circle cx="4.8" cy="4.6" r="1.3" fill="#d02020"/></svg>
<svg class="a" style="left:900.6px;top:660.5px" width="10" height="10" viewBox="0 0 10 10"><path d="M2,9 V1 M2,8 q5,-0.5 6.5,-6.5" fill="none" stroke="#202020" stroke-width="1"/><circle cx="6.6" cy="4.6" r="1.3" fill="#d02020"/></svg>
<div class="a" style="left:911.8000000000001px;top:659.3px;width:11.6px;height:12.2px;background:#f0eeea;border:1px solid;border-color:#807e78 #fff #fff #807e78;box-sizing:border-box"></div>
<svg class="a" style="left:912.6px;top:660.5px" width="10" height="10" viewBox="0 0 10 10"><path d="M2,1 v8 h7 M2,2.4 L8.6,8.6" fill="none" stroke="#202020" stroke-width="1"/><circle cx="2.2" cy="2.4" r="1.2" fill="#d02020"/><circle cx="8" cy="8" r="1.2" fill="#d02020"/></svg>
<svg class="a" style="left:925px;top:660.5px" width="10" height="10" viewBox="0 0 10 10"><path d="M1.5,8.5 q5.5,-0.5 6.5,-7" fill="none" stroke="#202020" stroke-width="1"/><path d="M1,4 l3,3" stroke="#d02020" stroke-width="1.2"/></svg>
<svg class="a" style="left:937.4px;top:660.5px" width="10" height="10" viewBox="0 0 10 10"><path d="M0.8,4 h8.4 v4.6 h-8.4 z" fill="#d8b838" stroke="#504010" stroke-width="0.7"/><path d="M2,4 l1,-2 h5 l1,2" fill="#e8d060" stroke="#504010" stroke-width="0.6"/></svg>
<svg class="a" style="left:950px;top:660.5px" width="10" height="10" viewBox="0 0 10 10"><path d="M1,2.4 h7.4 v6.4 h-5.4 z" fill="#e8d060" stroke="#504010" stroke-width="0.7"/><path d="M1,1 v3" stroke="#d02020" stroke-width="1"/></svg>
<div class="a" style="left:0;top:689px;width:960px;height:14px;background:#d4d0c8"></div>
<div class="sunk" style="left:0px;top:690.5px;width:72px;height:12px"></div>
<div class="sunk" style="left:73px;top:690.5px;width:72px;height:12px"></div>
<div class="sunk" style="left:146px;top:690.5px;width:21px;height:12px"></div>
<div class="sunk" style="left:168px;top:690.5px;width:41px;height:12px"></div>
<div class="t" style="left:151.5px;top:692.92px;font-size:7.3px;color:#101010;transform-origin:0 0;transform:scaleX(0.789);">m</div>
<div class="t" style="left:173.8px;top:692.92px;font-size:7.3px;color:#101010;transform-origin:0 0;transform:scaleX(0.812);">Ebene XY</div>
<div class="t" style="left:210.8px;top:692.92px;font-size:7.3px;color:#101010;transform-origin:0 0;transform:scaleX(0.787);">Bereit</div>
<div class="sunk" style="left:916px;top:690.5px;width:44px;height:12px"></div>
<div class="t" style="left:921.0px;top:692.82px;font-size:7.3px;color:#101010;transform-origin:0 0;transform:scaleX(0.817);">Fangmodus</div>
<div class="a" style="left:0;top:703px;width:960px;height:17px;background:#d4d0c8;border-top:1px solid #fff"></div>
<div class="tb" style="left:1px;top:705px;width:30px"></div>
<div class="t" style="left:12.5px;top:707.87px;font-size:7.6px;color:#080808;font-weight:bold;transform-origin:0 0;transform:scaleX(0.895);">Start</div>
<svg class="a" style="left:3px;top:708px" width="8" height="8"><path d="M0.5,1.5 q1.5,-1 3,0 v2.5 q-1.5,-1 -3,0 z" fill="#e04020"/><path d="M4.2,1.5 q1.5,1 3,0 v2.5 q-1.5,1 -3,0 z" fill="#30a030"/><path d="M0.5,4.7 q1.5,-1 3,0 v2.5 q-1.5,-1 -3,0 z" fill="#3060d0"/><path d="M4.2,4.7 q1.5,1 3,0 v2.5 q-1.5,1 -3,0 z" fill="#e0c020"/></svg>
<div class="tb" style="left:34px;top:705px;width:88px"></div>
<div class="t" style="left:46.5px;top:708.02px;font-size:7.3px;color:#080808;transform-origin:0 0;transform:scaleX(0.802);">Adobe Photoshop CS3 E...</div>
<svg class="a" style="left:37px;top:708px" width="9" height="9"><rect width="8.5" height="8.5" fill="#2050a8"/><text x="0.8" y="6.8" font-size="6" font-weight="bold" fill="#fff" font-family="Liberation Sans, sans-serif" textLength="7" lengthAdjust="spacingAndGlyphs">Ps</text></svg>
<div class="tb" style="left:125px;top:705px;width:89px"></div>
<div class="t" style="left:137.5px;top:708.02px;font-size:7.3px;color:#080808;transform-origin:0 0;transform:scaleX(0.841);">4. Ozzy Osbourne - Dee ...</div>
<svg class="a" style="left:128px;top:707.5px" width="10" height="10"><path d="M1,6 l5,-5 l3,3 l-5,5 z" fill="#e89020" stroke="#604010" stroke-width="0.7"/><path d="M3,6 l3,-3" stroke="#fff" stroke-width="0.8"/></svg>
<div class="tb" style="left:216px;top:705px;width:88px"></div>
<div class="t" style="left:227.5px;top:708.02px;font-size:7.3px;color:#080808;transform-origin:0 0;transform:scaleX(0.846);">J:\Seagate Sync\SyncRe...</div>
<svg class="a" style="left:218.5px;top:708px" width="9" height="8"><path d="M0.5,1.2 h2.6 l0.9,0.9 h4 v5 h-7.5 z" fill="#f0d860" stroke="#806810" stroke-width="0.7"/></svg>
<div class="tb" style="left:306px;top:705px;width:89px;border-color:#55534e #fff #fff #55534e;background:#f0eeea"></div>
<div class="t" style="left:320.0px;top:707.97px;font-size:7.6px;color:#080808;font-weight:bold;transform-origin:0 0;transform:scaleX(0.852);">Scia Engineer - [Rech...</div>
<svg class="a" style="left:309px;top:707.5px" width="10" height="10"><polygon points="0.5,1 4,1.5 4,9 2,7" fill="#f0c020"/><polygon points="4,1.5 8.5,1 6,8 4,9" fill="#30a0e0"/><polygon points="2,2 7,2 4.5,5" fill="#e03030"/></svg>
<div class="tb" style="left:397.5px;top:705px;width:88px"></div>
<div class="t" style="left:410.5px;top:708.02px;font-size:7.3px;color:#080808;transform-origin:0 0;transform:scaleX(0.801);">II1087 BV GS Eusserthal ...</div>
<svg class="a" style="left:400.5px;top:707.5px" width="9" height="9" viewBox="0 0 10 10"><path d="M1.5,1 l2,8 h3 l2,-8 z" fill="#e0a030" stroke="#604010" stroke-width="0.7"/><path d="M3.5,2.5 l1,5 M6,2.5 l-1,5" stroke="#3060c0" stroke-width="0.8"/></svg>
<div class="a" style="left:874px;top:707.5px;width:10px;height:9px;background:#1a3a9a"></div>
<div class="t" style="left:875px;top:709px;font-size:6.5px;font-weight:bold;color:#fff">DE</div>
<svg class="a" style="left:889px;top:707.5px" width="10" height="10"><rect x="2" y="0.8" width="6" height="3" fill="#fff" stroke="#404040" stroke-width="0.6"/><rect x="0.8" y="3.5" width="8.4" height="4" fill="#c0c0c0" stroke="#404040" stroke-width="0.6"/><rect x="2.2" y="6.3" width="5.6" height="2.8" fill="#fff" stroke="#404040" stroke-width="0.6"/></svg>
<div class="a" style="left:905px;top:704.5px;width:58px;height:16px;background:#fff;border:1px solid;border-color:#808080 #fff #fff #808080;box-sizing:border-box"></div>
<div class="t" style="left:909.0px;top:707.82px;font-size:7.3px;color:#8a8a8a;transform-origin:0 0;transform:scaleX(0.832);">Desktop durchsuch</div>
<svg width="960" height="720" viewBox="0 0 960 720" style="position:absolute;left:0;top:0" font-family="Liberation Sans, sans-serif"><line x1="406.4" y1="524.5" x2="531.4" y2="567.1" stroke="#3a3a3a" stroke-width="0.7" stroke-dasharray="7 4"/>
<line x1="531.4" y1="567.1" x2="615.2" y2="503.2" stroke="#3a3a3a" stroke-width="0.7" stroke-dasharray="7 4"/>
<line x1="406.4" y1="524.5" x2="490.2" y2="460.5" stroke="#3a3a3a" stroke-width="0.7" stroke-dasharray="7 4"/>
<line x1="490.2" y1="460.5" x2="615.2" y2="503.2" stroke="#3a3a3a" stroke-width="0.7" stroke-dasharray="7 4"/>
<line x1="406.4" y1="468.1" x2="406.4" y2="524.5" stroke="#3a3a3a" stroke-width="0.7" stroke-dasharray="7 4"/>
<line x1="531.4" y1="524.8" x2="531.4" y2="567.1" stroke="#3a3a3a" stroke-width="0.7" stroke-dasharray="7 4"/>
<line x1="615.2" y1="456.1" x2="615.2" y2="555.2" stroke="#3a3a3a" stroke-width="0.7" stroke-dasharray="7 4"/>
<polygon points="476.0,500.0 488.1,516.0 500.3,519.9 498.0,500.0" fill="#8e8e8e" stroke="#8e8e8e" stroke-width="0.4"/>
<polygon points="498.0,500.0 500.3,519.9 510.6,523.6 508.0,515.0 516.0,500.0" fill="#6c6c6c" stroke="#6c6c6c" stroke-width="0.4"/>
<polygon points="507.8,514.5 510.6,523.6 515.0,518.5 512.0,512.0" fill="#2c2c2c" stroke="#2c2c2c" stroke-width="0.4"/>
<polygon points="515.0,518.5 510.6,523.6 516.0,525.0 523.0,520.0 524.0,508.0 512.0,508.0" fill="#767676" stroke="#767676" stroke-width="0.4"/>
<polygon points="486.2,515.8 514.6,526.4 523.0,521.0 520.5,519.8 514.6,523.6 488.5,514.3" fill="#b2b2b2" stroke="#b2b2b2" stroke-width="0.4"/>
<polygon points="386.6,471.5 535.4,522.2 635.0,446.1 486.2,395.3" fill="#3a3ac8" stroke="#3a3ac8" stroke-width="0.4"/>
<polygon points="386.6,471.5 535.4,522.2 535.4,523.3 386.6,472.5" fill="#2a2ab0" stroke="#2a2ab0" stroke-width="0.4"/>
<polygon points="535.4,522.2 635.0,446.1 635.0,447.1 535.4,523.3" fill="#3c3cd8" stroke="#3c3cd8" stroke-width="0.4"/>
<polygon points="394.3,459.3 533.8,506.9 533.8,518.3 394.3,470.7" fill="#5252ee" stroke="#5252ee" stroke-width="0.4"/>
<polygon points="533.8,506.9 627.3,435.4 627.3,446.9 533.8,518.3" fill="#2828a4" stroke="#2828a4" stroke-width="0.4"/>
<polygon points="386.6,459.0 535.4,509.8 635.0,433.6 486.2,382.9" fill="#3434c2" stroke="#3434c2" stroke-width="0.4"/>
<polygon points="386.6,459.0 535.4,509.8 535.4,510.8 386.6,460.1" fill="#2c2cb4" stroke="#2c2cb4" stroke-width="0.4"/>
<polygon points="535.4,509.8 635.0,433.6 635.0,434.6 535.4,510.8" fill="#4a4ae6" stroke="#4a4ae6" stroke-width="0.4"/>
<polygon points="529.7,507.8 535.4,509.8 635.0,433.6 629.4,431.7" fill="#4646e2" stroke="#4646e2" stroke-width="0.4"/>
<polygon points="396.7,448.3 533.4,494.9 624.9,424.9 488.2,378.3" fill="#8a8a8a" stroke="#8a8a8a" stroke-width="0.4"/>
<polygon points="396.7,448.3 533.4,494.9 533.4,504.6 396.7,458.0" fill="#c6c6c6" stroke="#c6c6c6" stroke-width="0.4"/>
<polygon points="533.4,494.9 624.9,424.9 624.9,434.6 533.4,504.6" fill="#666666" stroke="#666666" stroke-width="0.4"/>
<polygon points="396.7,448.3 533.4,494.9 531.4,488.1 406.4,445.5" fill="#767676" stroke="#767676" stroke-width="0.4"/>
<polygon points="533.4,494.9 624.9,424.9 615.2,424.1 531.4,488.1" fill="#a8a8a8" stroke="#a8a8a8" stroke-width="0.4"/>
<line x1="433.8" y1="460.9" x2="433.8" y2="470.6" stroke="#8c8c8c" stroke-width="0.7"/>
<line x1="558.2" y1="475.9" x2="558.2" y2="485.6" stroke="#4c4c4c" stroke-width="0.7"/>
<line x1="465.0" y1="471.6" x2="465.0" y2="481.3" stroke="#8c8c8c" stroke-width="0.7"/>
<line x1="579.1" y1="459.9" x2="579.1" y2="469.6" stroke="#4c4c4c" stroke-width="0.7"/>
<line x1="496.3" y1="482.2" x2="496.3" y2="492.0" stroke="#8c8c8c" stroke-width="0.7"/>
<line x1="600.1" y1="443.9" x2="600.1" y2="453.6" stroke="#4c4c4c" stroke-width="0.7"/>
<polygon points="396.7,448.3 406.4,445.5 490.2,381.5 488.2,378.3" fill="#a0a0a0" stroke="#a0a0a0" stroke-width="0.4"/>
<polygon points="396.0,377.4 533.5,424.3 625.6,353.9 488.1,307.0" fill="#1cacac" stroke="#1cacac" stroke-width="0.4"/>
<polygon points="396.0,377.4 533.5,424.3 533.5,427.6 396.0,380.7" fill="#30e4e4" stroke="#30e4e4" stroke-width="0.4"/>
<polygon points="533.5,424.3 625.6,353.9 625.6,357.2 533.5,427.6" fill="#168c8c" stroke="#168c8c" stroke-width="0.4"/>
<polygon points="396.0,306.8 533.5,353.7 625.6,283.3 488.1,236.4" fill="#1cacac" stroke="#1cacac" stroke-width="0.4"/>
<polygon points="396.0,306.8 533.5,353.7 533.5,357.0 396.0,310.1" fill="#30e4e4" stroke="#30e4e4" stroke-width="0.4"/>
<polygon points="533.5,353.7 625.6,283.3 625.6,286.6 533.5,357.0" fill="#168c8c" stroke="#168c8c" stroke-width="0.4"/>
<polygon points="396.0,236.2 533.5,283.1 625.6,212.7 488.1,165.8" fill="#1cacac" stroke="#1cacac" stroke-width="0.4"/>
<polygon points="396.0,236.2 533.5,283.1 533.5,286.4 396.0,239.5" fill="#30e4e4" stroke="#30e4e4" stroke-width="0.4"/>
<polygon points="533.5,283.1 625.6,212.7 625.6,216.0 533.5,286.4" fill="#168c8c" stroke="#168c8c" stroke-width="0.4"/>
<polygon points="406.4,164.6 531.4,207.2 615.2,143.2 615.2,425.5 531.4,489.5 406.4,446.9" fill="#5e5e5e" stroke="#5e5e5e" stroke-width="0.4"/>
<polygon points="406.4,164.6 531.4,207.2 531.4,489.5 406.4,446.9" fill="#c2c2c2" stroke="#c2c2c2" stroke-width="0.4"/>
<polygon points="531.4,207.2 615.2,143.2 615.2,425.5 531.4,489.5" fill="#5e5e5e" stroke="#5e5e5e" stroke-width="0.4"/>
<polygon points="406.4,164.6 408.5,165.3 408.5,447.6 406.4,446.9" fill="#cccccc" stroke="#cccccc" stroke-width="0.4"/>
<polygon points="437.7,390.3 433.5,393.5 433.5,460.3 437.7,457.1" fill="#6e6e6e" stroke="#6e6e6e" stroke-width="0.4"/>
<line x1="433.5" y1="393.5" x2="433.5" y2="460.3" stroke="#787878" stroke-width="0.5"/>
<polygon points="468.9,400.9 464.7,404.1 464.7,470.9 468.9,467.7" fill="#6e6e6e" stroke="#6e6e6e" stroke-width="0.4"/>
<line x1="464.7" y1="404.1" x2="464.7" y2="470.9" stroke="#787878" stroke-width="0.5"/>
<polygon points="500.2,411.6 496.0,414.8 496.0,481.6 500.2,478.4" fill="#6e6e6e" stroke="#6e6e6e" stroke-width="0.4"/>
<line x1="496.0" y1="414.8" x2="496.0" y2="481.6" stroke="#787878" stroke-width="0.5"/>
<polygon points="552.4,406.2 558.6,408.4 558.6,475.2 552.4,473.0" fill="#bcbcbc" stroke="#bcbcbc" stroke-width="0.4"/>
<line x1="558.6" y1="408.4" x2="558.6" y2="475.2" stroke="#8a8a8a" stroke-width="0.5"/>
<polygon points="573.3,390.2 579.6,392.4 579.6,459.2 573.3,457.0" fill="#bcbcbc" stroke="#bcbcbc" stroke-width="0.4"/>
<line x1="579.6" y1="392.4" x2="579.6" y2="459.2" stroke="#8a8a8a" stroke-width="0.5"/>
<polygon points="594.2,374.2 600.5,376.4 600.5,443.2 594.2,441.0" fill="#bcbcbc" stroke="#bcbcbc" stroke-width="0.4"/>
<line x1="600.5" y1="376.4" x2="600.5" y2="443.2" stroke="#8a8a8a" stroke-width="0.5"/>
<polygon points="396.0,377.4 533.5,424.3 531.4,418.9 406.4,376.3" fill="#1cacac" stroke="#1cacac" stroke-width="0.4"/>
<polygon points="533.5,424.3 625.6,353.9 615.2,354.9 531.4,418.9" fill="#1aa6a6" stroke="#1aa6a6" stroke-width="0.4"/>
<polygon points="396.0,377.4 533.5,424.3 533.5,427.6 396.0,380.7" fill="#30e4e4" stroke="#30e4e4" stroke-width="0.4"/>
<polygon points="533.5,424.3 625.6,353.9 625.6,357.2 533.5,427.6" fill="#168c8c" stroke="#168c8c" stroke-width="0.4"/>
<line x1="396.0" y1="377.4" x2="533.5" y2="424.3" stroke="#189a9a" stroke-width="0.5"/>
<line x1="433.5" y1="390.2" x2="437.7" y2="387.0" stroke="#147878" stroke-width="0.6"/>
<line x1="464.7" y1="400.8" x2="468.9" y2="397.6" stroke="#147878" stroke-width="0.6"/>
<line x1="496.0" y1="411.5" x2="500.2" y2="408.3" stroke="#147878" stroke-width="0.6"/>
<line x1="558.6" y1="405.1" x2="552.4" y2="402.9" stroke="#147878" stroke-width="0.6"/>
<line x1="579.6" y1="389.1" x2="573.3" y2="386.9" stroke="#147878" stroke-width="0.6"/>
<line x1="600.5" y1="373.1" x2="594.2" y2="370.9" stroke="#147878" stroke-width="0.6"/>
<line x1="533.5" y1="424.3" x2="531.4" y2="418.9" stroke="#147878" stroke-width="0.5"/>
<polygon points="437.7,319.7 433.5,322.9 433.5,390.2 437.7,387.0" fill="#6e6e6e" stroke="#6e6e6e" stroke-width="0.4"/>
<line x1="433.5" y1="322.9" x2="433.5" y2="390.2" stroke="#787878" stroke-width="0.5"/>
<polygon points="468.9,330.3 464.7,333.5 464.7,400.8 468.9,397.6" fill="#6e6e6e" stroke="#6e6e6e" stroke-width="0.4"/>
<line x1="464.7" y1="333.5" x2="464.7" y2="400.8" stroke="#787878" stroke-width="0.5"/>
<polygon points="500.2,341.0 496.0,344.2 496.0,411.5 500.2,408.3" fill="#6e6e6e" stroke="#6e6e6e" stroke-width="0.4"/>
<line x1="496.0" y1="344.2" x2="496.0" y2="411.5" stroke="#787878" stroke-width="0.5"/>
<polygon points="552.4,335.7 558.6,337.8 558.6,405.1 552.4,402.9" fill="#bcbcbc" stroke="#bcbcbc" stroke-width="0.4"/>
<line x1="558.6" y1="337.8" x2="558.6" y2="405.1" stroke="#8a8a8a" stroke-width="0.5"/>
<polygon points="573.3,319.7 579.6,321.8 579.6,389.1 573.3,386.9" fill="#bcbcbc" stroke="#bcbcbc" stroke-width="0.4"/>
<line x1="579.6" y1="321.8" x2="579.6" y2="389.1" stroke="#8a8a8a" stroke-width="0.5"/>
<polygon points="594.2,303.7 600.5,305.8 600.5,373.1 594.2,370.9" fill="#bcbcbc" stroke="#bcbcbc" stroke-width="0.4"/>
<line x1="600.5" y1="305.8" x2="600.5" y2="373.1" stroke="#8a8a8a" stroke-width="0.5"/>
<polygon points="396.0,306.8 533.5,353.7 531.4,348.4 406.4,305.7" fill="#1cacac" stroke="#1cacac" stroke-width="0.4"/>
<polygon points="533.5,353.7 625.6,283.3 615.2,284.4 531.4,348.4" fill="#1aa6a6" stroke="#1aa6a6" stroke-width="0.4"/>
<polygon points="396.0,306.8 533.5,353.7 533.5,357.0 396.0,310.1" fill="#30e4e4" stroke="#30e4e4" stroke-width="0.4"/>
<polygon points="533.5,353.7 625.6,283.3 625.6,286.6 533.5,357.0" fill="#168c8c" stroke="#168c8c" stroke-width="0.4"/>
<line x1="396.0" y1="306.8" x2="533.5" y2="353.7" stroke="#189a9a" stroke-width="0.5"/>
<line x1="433.5" y1="319.6" x2="437.7" y2="316.4" stroke="#147878" stroke-width="0.6"/>
<line x1="464.7" y1="330.2" x2="468.9" y2="327.0" stroke="#147878" stroke-width="0.6"/>
<line x1="496.0" y1="340.9" x2="500.2" y2="337.7" stroke="#147878" stroke-width="0.6"/>
<line x1="558.6" y1="334.5" x2="552.4" y2="332.4" stroke="#147878" stroke-width="0.6"/>
<line x1="579.6" y1="318.5" x2="573.3" y2="316.4" stroke="#147878" stroke-width="0.6"/>
<line x1="600.5" y1="302.5" x2="594.2" y2="300.4" stroke="#147878" stroke-width="0.6"/>
<line x1="533.5" y1="353.7" x2="531.4" y2="348.4" stroke="#147878" stroke-width="0.5"/>
<polygon points="437.7,249.1 433.5,252.3 433.5,319.6 437.7,316.4" fill="#6e6e6e" stroke="#6e6e6e" stroke-width="0.4"/>
<line x1="433.5" y1="252.3" x2="433.5" y2="319.6" stroke="#787878" stroke-width="0.5"/>
<polygon points="468.9,259.8 464.7,263.0 464.7,330.2 468.9,327.0" fill="#6e6e6e" stroke="#6e6e6e" stroke-width="0.4"/>
<line x1="464.7" y1="263.0" x2="464.7" y2="330.2" stroke="#787878" stroke-width="0.5"/>
<polygon points="500.2,270.4 496.0,273.6 496.0,340.9 500.2,337.7" fill="#6e6e6e" stroke="#6e6e6e" stroke-width="0.4"/>
<line x1="496.0" y1="273.6" x2="496.0" y2="340.9" stroke="#787878" stroke-width="0.5"/>
<polygon points="552.4,265.1 558.6,267.2 558.6,334.5 552.4,332.4" fill="#bcbcbc" stroke="#bcbcbc" stroke-width="0.4"/>
<line x1="558.6" y1="267.2" x2="558.6" y2="334.5" stroke="#8a8a8a" stroke-width="0.5"/>
<polygon points="573.3,249.1 579.6,251.2 579.6,318.5 573.3,316.4" fill="#bcbcbc" stroke="#bcbcbc" stroke-width="0.4"/>
<line x1="579.6" y1="251.2" x2="579.6" y2="318.5" stroke="#8a8a8a" stroke-width="0.5"/>
<polygon points="594.2,233.1 600.5,235.2 600.5,302.5 594.2,300.4" fill="#bcbcbc" stroke="#bcbcbc" stroke-width="0.4"/>
<line x1="600.5" y1="235.2" x2="600.5" y2="302.5" stroke="#8a8a8a" stroke-width="0.5"/>
<polygon points="396.0,236.2 533.5,283.1 531.4,277.8 406.4,235.2" fill="#1cacac" stroke="#1cacac" stroke-width="0.4"/>
<polygon points="533.5,283.1 625.6,212.7 615.2,213.8 531.4,277.8" fill="#1aa6a6" stroke="#1aa6a6" stroke-width="0.4"/>
<polygon points="396.0,236.2 533.5,283.1 533.5,286.4 396.0,239.5" fill="#30e4e4" stroke="#30e4e4" stroke-width="0.4"/>
<polygon points="533.5,283.1 625.6,212.7 625.6,216.0 533.5,286.4" fill="#168c8c" stroke="#168c8c" stroke-width="0.4"/>
<line x1="396.0" y1="236.2" x2="533.5" y2="283.1" stroke="#189a9a" stroke-width="0.5"/>
<line x1="433.5" y1="249.0" x2="437.7" y2="245.8" stroke="#147878" stroke-width="0.6"/>
<line x1="464.7" y1="259.7" x2="468.9" y2="256.5" stroke="#147878" stroke-width="0.6"/>
<line x1="496.0" y1="270.3" x2="500.2" y2="267.1" stroke="#147878" stroke-width="0.6"/>
<line x1="558.6" y1="263.9" x2="552.4" y2="261.8" stroke="#147878" stroke-width="0.6"/>
<line x1="579.6" y1="247.9" x2="573.3" y2="245.8" stroke="#147878" stroke-width="0.6"/>
<line x1="600.5" y1="231.9" x2="594.2" y2="229.8" stroke="#147878" stroke-width="0.6"/>
<line x1="533.5" y1="283.1" x2="531.4" y2="277.8" stroke="#147878" stroke-width="0.5"/>
<polygon points="437.7,178.5 433.5,181.7 433.5,249.0 437.7,245.8" fill="#6e6e6e" stroke="#6e6e6e" stroke-width="0.4"/>
<line x1="433.5" y1="181.7" x2="433.5" y2="249.0" stroke="#787878" stroke-width="0.5"/>
<polygon points="468.9,189.2 464.7,192.4 464.7,259.7 468.9,256.5" fill="#6e6e6e" stroke="#6e6e6e" stroke-width="0.4"/>
<line x1="464.7" y1="192.4" x2="464.7" y2="259.7" stroke="#787878" stroke-width="0.5"/>
<polygon points="500.2,199.8 496.0,203.0 496.0,270.3 500.2,267.1" fill="#6e6e6e" stroke="#6e6e6e" stroke-width="0.4"/>
<line x1="496.0" y1="203.0" x2="496.0" y2="270.3" stroke="#787878" stroke-width="0.5"/>
<polygon points="552.4,194.5 558.6,196.6 558.6,263.9 552.4,261.8" fill="#bcbcbc" stroke="#bcbcbc" stroke-width="0.4"/>
<line x1="558.6" y1="196.6" x2="558.6" y2="263.9" stroke="#8a8a8a" stroke-width="0.5"/>
<polygon points="573.3,178.5 579.6,180.6 579.6,247.9 573.3,245.8" fill="#bcbcbc" stroke="#bcbcbc" stroke-width="0.4"/>
<line x1="579.6" y1="180.6" x2="579.6" y2="247.9" stroke="#8a8a8a" stroke-width="0.5"/>
<polygon points="594.2,162.5 600.5,164.6 600.5,231.9 594.2,229.8" fill="#bcbcbc" stroke="#bcbcbc" stroke-width="0.4"/>
<line x1="600.5" y1="164.6" x2="600.5" y2="231.9" stroke="#8a8a8a" stroke-width="0.5"/>
<polygon points="396.0,165.6 533.5,212.5 625.6,142.2 488.1,95.3" fill="#1cacac" stroke="#1cacac" stroke-width="0.4"/>
<polygon points="396.0,165.6 533.5,212.5 533.5,215.8 396.0,168.9" fill="#30e4e4" stroke="#30e4e4" stroke-width="0.4"/>
<polygon points="533.5,212.5 625.6,142.2 625.6,145.4 533.5,215.8" fill="#168c8c" stroke="#168c8c" stroke-width="0.4"/>
<line x1="396.0" y1="165.6" x2="533.5" y2="212.5" stroke="#189a9a" stroke-width="0.5"/>
<polygon points="406.4,164.6 531.4,207.2 615.2,143.2 490.2,100.6" fill="#8a8a8a" stroke="#5a5a5a" stroke-width="0.6"/>
<line x1="433.5" y1="178.4" x2="437.7" y2="175.2" stroke="#147878" stroke-width="0.6"/>
<line x1="525.6" y1="108.0" x2="521.4" y2="111.2" stroke="#147878" stroke-width="0.6"/>
<line x1="558.6" y1="193.3" x2="552.4" y2="191.2" stroke="#147878" stroke-width="0.6"/>
<line x1="421.1" y1="146.5" x2="427.4" y2="148.6" stroke="#147878" stroke-width="0.6"/>
<line x1="464.7" y1="189.1" x2="468.9" y2="185.9" stroke="#147878" stroke-width="0.6"/>
<line x1="556.9" y1="118.7" x2="552.7" y2="121.9" stroke="#147878" stroke-width="0.6"/>
<line x1="579.6" y1="177.3" x2="573.3" y2="175.2" stroke="#147878" stroke-width="0.6"/>
<line x1="442.0" y1="130.5" x2="448.3" y2="132.6" stroke="#147878" stroke-width="0.6"/>
<line x1="496.0" y1="199.8" x2="500.2" y2="196.6" stroke="#147878" stroke-width="0.6"/>
<line x1="588.1" y1="129.4" x2="583.9" y2="132.6" stroke="#147878" stroke-width="0.6"/>
<line x1="600.5" y1="161.3" x2="594.2" y2="159.2" stroke="#147878" stroke-width="0.6"/>
<line x1="463.0" y1="114.5" x2="469.2" y2="116.6" stroke="#147878" stroke-width="0.6"/>
<line x1="396.0" y1="165.6" x2="406.4" y2="164.6" stroke="#147878" stroke-width="0.5"/>
<line x1="533.5" y1="212.5" x2="531.4" y2="207.2" stroke="#147878" stroke-width="0.5"/>
<line x1="625.6" y1="142.2" x2="615.2" y2="143.2" stroke="#147878" stroke-width="0.5"/>
<line x1="488.1" y1="95.3" x2="490.2" y2="100.6" stroke="#147878" stroke-width="0.5"/>
<polygon points="432.0,145.1 557.0,187.7 559.9,185.5 434.9,142.8" fill="#909090" stroke="#909090" stroke-width="0.4"/>
<line x1="432.0" y1="145.1" x2="557.0" y2="187.7" stroke="#606060" stroke-width="0.6"/>
<line x1="434.9" y1="142.8" x2="559.9" y2="185.5" stroke="#606060" stroke-width="0.6"/>
<polygon points="461.7,122.3 586.7,165.0 589.6,162.7 464.6,120.1" fill="#909090" stroke="#909090" stroke-width="0.4"/>
<line x1="461.7" y1="122.3" x2="586.7" y2="165.0" stroke="#606060" stroke-width="0.6"/>
<line x1="464.6" y1="120.1" x2="589.6" y2="162.7" stroke="#606060" stroke-width="0.6"/>
<polygon points="444.6,177.6 528.3,113.6 532.7,115.1 448.9,179.1" fill="#909090" stroke="#909090" stroke-width="0.4"/>
<line x1="444.6" y1="177.6" x2="528.3" y2="113.6" stroke="#606060" stroke-width="0.6"/>
<line x1="448.9" y1="179.1" x2="532.7" y2="115.1" stroke="#606060" stroke-width="0.6"/>
<polygon points="488.9,192.7 572.7,128.7 577.0,130.2 493.3,194.2" fill="#909090" stroke="#909090" stroke-width="0.4"/>
<line x1="488.9" y1="192.7" x2="572.7" y2="128.7" stroke="#606060" stroke-width="0.6"/>
<line x1="493.3" y1="194.2" x2="577.0" y2="130.2" stroke="#606060" stroke-width="0.6"/>
<polygon points="470.1,158.1 474.5,159.6 477.4,157.3 473.0,155.8" fill="#909090" stroke="#909090" stroke-width="0.4"/>
<polygon points="499.8,135.3 504.2,136.8 507.1,134.6 502.8,133.1" fill="#909090" stroke="#909090" stroke-width="0.4"/>
<polygon points="514.5,173.2 518.8,174.7 521.8,172.5 517.4,171.0" fill="#909090" stroke="#909090" stroke-width="0.4"/>
<polygon points="544.2,150.5 548.6,152.0 551.5,149.7 547.1,148.2" fill="#909090" stroke="#909090" stroke-width="0.4"/>
<clipPath id="hole"><polygon points="477.4,157.3 504.2,136.8 544.2,150.5 517.4,171.0"/></clipPath>
<g clip-path="url(#hole)">
<polygon points="477.4,157.3 504.2,136.8 544.2,150.5 517.4,171.0" fill="#c4c4c4" stroke="#c4c4c4" stroke-width="0.4"/>
<polygon points="477.4,157.3 490.6,146.6 490.6,175.0 470.0,175.0" fill="#626262" stroke="#626262" stroke-width="0.4"/>
<polygon points="490.6,146.6 504.2,136.8 504.6,140.0 490.6,149.8" fill="#6e6e6e" stroke="#6e6e6e" stroke-width="0.4"/>
<polygon points="521.0,143.0 545.2,150.5 545.2,180.0 521.0,180.0" fill="#d2d2d2" stroke="#d2d2d2" stroke-width="0.4"/>
<line x1="521.0" y1="142.0" x2="521.0" y2="180.0" stroke="#4c4c4c" stroke-width="0.8"/>
<polygon points="504.2,136.8 544.2,150.5 542.2,152.5 504.7,138.8" fill="#e8e8e8" stroke="#e8e8e8" stroke-width="0.4"/>
</g>
<polygon points="477.4,157.3 504.2,136.8 544.2,150.5 517.4,171.0" fill="none" stroke="#5c5c5c" stroke-width="0.6"/>
<line x1="627.6" y1="148.2" x2="684.3" y2="167.5" stroke="#3a3a3a" stroke-width="0.6"/>
<line x1="627.6" y1="218.7" x2="662.5" y2="230.6" stroke="#3a3a3a" stroke-width="0.6"/>
<line x1="627.6" y1="289.3" x2="662.5" y2="301.2" stroke="#3a3a3a" stroke-width="0.6"/>
<line x1="627.6" y1="359.9" x2="662.5" y2="371.8" stroke="#3a3a3a" stroke-width="0.6"/>
<line x1="630.0" y1="431.3" x2="662.5" y2="442.4" stroke="#3a3a3a" stroke-width="0.6"/>
<line x1="660.5" y1="159.4" x2="660.5" y2="518.6" stroke="#3a3a3a" stroke-width="0.6"/>
<line x1="682.3" y1="166.8" x2="682.3" y2="526.0" stroke="#3a3a3a" stroke-width="0.6"/>
<line x1="615.2" y1="503.2" x2="684.3" y2="526.7" stroke="#3a3a3a" stroke-width="0.7" stroke-dasharray="9 3 2 3"/>
<line x1="659.0" y1="156.9" x2="662.0" y2="161.9" stroke="#3a3a3a" stroke-width="0.6"/>
<line x1="659.0" y1="227.4" x2="662.0" y2="232.4" stroke="#3a3a3a" stroke-width="0.6"/>
<line x1="659.0" y1="298.0" x2="662.0" y2="303.0" stroke="#3a3a3a" stroke-width="0.6"/>
<line x1="659.0" y1="368.6" x2="662.0" y2="373.6" stroke="#3a3a3a" stroke-width="0.6"/>
<line x1="659.0" y1="439.2" x2="662.0" y2="444.2" stroke="#3a3a3a" stroke-width="0.6"/>
<line x1="659.0" y1="516.1" x2="662.0" y2="521.1" stroke="#3a3a3a" stroke-width="0.6"/>
<line x1="680.8" y1="164.3" x2="683.8" y2="169.3" stroke="#3a3a3a" stroke-width="0.6"/>
<line x1="680.8" y1="523.5" x2="683.8" y2="528.5" stroke="#3a3a3a" stroke-width="0.6"/>
<text x="659.3" y="194.7" font-size="8" fill="#404040" font-style="italic" text-anchor="middle" transform="rotate(-90 659.3 194.7)">1500</text>
<text x="659.3" y="265.2" font-size="8" fill="#404040" font-style="italic" text-anchor="middle" transform="rotate(-90 659.3 265.2)">1500</text>
<text x="659.3" y="335.8" font-size="8" fill="#404040" font-style="italic" text-anchor="middle" transform="rotate(-90 659.3 335.8)">1500</text>
<text x="659.3" y="406.4" font-size="8" fill="#404040" font-style="italic" text-anchor="middle" transform="rotate(-90 659.3 406.4)">1500</text>
<text x="659.3" y="480.1" font-size="8" fill="#404040" font-style="italic" text-anchor="middle" transform="rotate(-90 659.3 480.1)">1650</text>
<text x="680.5" y="346.4" font-size="8" fill="#404040" font-style="italic" text-anchor="middle" transform="rotate(-90 680.5 346.4)">7650</text>
<line x1="371.3" y1="548.0" x2="503.3" y2="593.1" stroke="#3a3a3a" stroke-width="0.6"/>
<line x1="399.5" y1="529.8" x2="371.5" y2="551.2" stroke="#3a3a3a" stroke-width="0.6"/>
<line x1="524.5" y1="572.5" x2="496.6" y2="593.8" stroke="#3a3a3a" stroke-width="0.6"/>
<text x="441.0" y="570.3" font-size="6.3" fill="#333" font-style="italic" text-anchor="middle" transform="rotate(19 441.0 570.3)">3000</text>
<line x1="371.8" y1="550.5" x2="376.8" y2="547.5" stroke="#3a3a3a" stroke-width="0.6"/>
<line x1="496.8" y1="593.2" x2="501.8" y2="590.2" stroke="#3a3a3a" stroke-width="0.6"/>
<line x1="575.5" y1="585.5" x2="665.3" y2="516.9" stroke="#3a3a3a" stroke-width="0.6"/>
<line x1="531.4" y1="567.1" x2="581.9" y2="584.3" stroke="#3a3a3a" stroke-width="0.7" stroke-dasharray="9 3 2 3"/>
<line x1="576.0" y1="581.7" x2="581.0" y2="584.7" stroke="#3a3a3a" stroke-width="0.6"/>
<line x1="659.8" y1="517.7" x2="664.8" y2="520.7" stroke="#3a3a3a" stroke-width="0.6"/>
<text x="616.5" y="551.5" font-size="6.3" fill="#333" font-style="italic" text-anchor="middle" transform="rotate(-37 616.5 551.5)">3000</text>
<line x1="557.5" y1="533.6" x2="616.0" y2="553.6" stroke="#3a3a3a" stroke-width="0.6"/>
<line x1="491.9" y1="519.3" x2="467.4" y2="537.8" stroke="#3a3a3a" stroke-width="0.6"/>
<line x1="508.6" y1="524.9" x2="486.6" y2="541.9" stroke="#3a3a3a" stroke-width="0.6"/>
<line x1="468.9" y1="534.6" x2="489.6" y2="542.1" stroke="#3a3a3a" stroke-width="0.6"/>
<text x="479.3" y="540.0" font-size="6.3" fill="#333" font-style="italic" text-anchor="middle" transform="rotate(19 479.3 540.0)">400</text>
<line x1="496.2" y1="523.5" x2="496.2" y2="564.0" stroke="#3a3a3a" stroke-width="0.6"/>
<line x1="513.5" y1="526.5" x2="513.5" y2="569.0" stroke="#3a3a3a" stroke-width="0.6"/>
<line x1="494.0" y1="561.0" x2="516.0" y2="568.3" stroke="#3a3a3a" stroke-width="0.6"/>
<text x="505.3" y="563.2" font-size="6.6" fill="#333" font-style="italic" text-anchor="middle" transform="rotate(8 505.3 563.2)" font-style="normal">400</text>
<line x1="535.0" y1="519.5" x2="567.5" y2="527.0" stroke="#3a3a3a" stroke-width="0.6"/>
<line x1="557.0" y1="533.5" x2="567.0" y2="527.0" stroke="#3a3a3a" stroke-width="0.6"/>
<circle cx="523.5" cy="522.8" r="1.2" fill="none" stroke="#444" stroke-width="0.5"/>
<circle cx="526.5" cy="523.8" r="1.2" fill="none" stroke="#444" stroke-width="0.5"/>
<circle cx="529.5" cy="524.8" r="1.2" fill="none" stroke="#444" stroke-width="0.5"/>
<circle cx="532.5" cy="525.8" r="1.2" fill="none" stroke="#444" stroke-width="0.5"/>
<circle cx="535.5" cy="526.8" r="1.2" fill="none" stroke="#444" stroke-width="0.5"/>
<circle cx="538.5" cy="527.8" r="1.2" fill="none" stroke="#444" stroke-width="0.5"/>
<circle cx="541.5" cy="528.8" r="1.2" fill="none" stroke="#444" stroke-width="0.5"/>
<circle cx="544.5" cy="529.8" r="1.2" fill="none" stroke="#444" stroke-width="0.5"/>
<circle cx="547.5" cy="530.8" r="1.2" fill="none" stroke="#444" stroke-width="0.5"/>
<circle cx="550.5" cy="531.8" r="1.2" fill="none" stroke="#444" stroke-width="0.5"/>
<circle cx="553.5" cy="532.8" r="1.2" fill="none" stroke="#444" stroke-width="0.5"/>
<circle cx="556.5" cy="533.8" r="1.2" fill="none" stroke="#444" stroke-width="0.5"/>
<text x="552.5" y="529.0" font-size="7" fill="#333" font-style="italic" text-anchor="middle" transform="rotate(12 552.5 529.0)">300</text>
<line x1="406.4" y1="524.5" x2="406.4" y2="504.5" stroke="#0000e0" stroke-width="2.2"/>
<line x1="406.4" y1="524.5" x2="414.4" y2="518.3" stroke="#00c000" stroke-width="1.0"/>
<polygon points="412.4,518.0 418.9,515.0 414.9,520.0" fill="#fff" stroke="#00c000" stroke-width="0.8"/>
<text x="418.4" y="514.0" font-size="8.5" font-weight="bold" fill="#00c000" transform="rotate(-15 418.4 514.0)">Y</text>
<polygon points="406.4,524.5 418.4,525.5 418.4,524.0 425.4,528.5 417.4,530.5 417.9,528.8 406.4,526.1" fill="#fff" stroke="#e02020" stroke-width="0.9"/>
<text x="427.4" y="536.0" font-size="9.5" font-weight="bold" fill="#e00000" transform="rotate(-12 427.4 536.0)">X</text></svg>
<svg class="a" style="left:0;top:0" width="960" height="720" font-family="Liberation Sans, sans-serif"><path d="M136.3,601.3 V585.6" stroke="#5050e0" stroke-width="1"/><path d="M136.3,601.3 L149.4,606.4" stroke="#e04040" stroke-width="0.9"/><path d="M136.3,601.3 L144.4,594" stroke="#40b840" stroke-width="0.9"/><text x="137.2" y="590.5" font-size="6" font-weight="bold" fill="#4040d0">z</text><text x="150.6" y="612" font-size="6" fill="#d03030">x</text><text x="146" y="599" font-size="6" fill="#40a840">y</text></svg>
</body></html>
